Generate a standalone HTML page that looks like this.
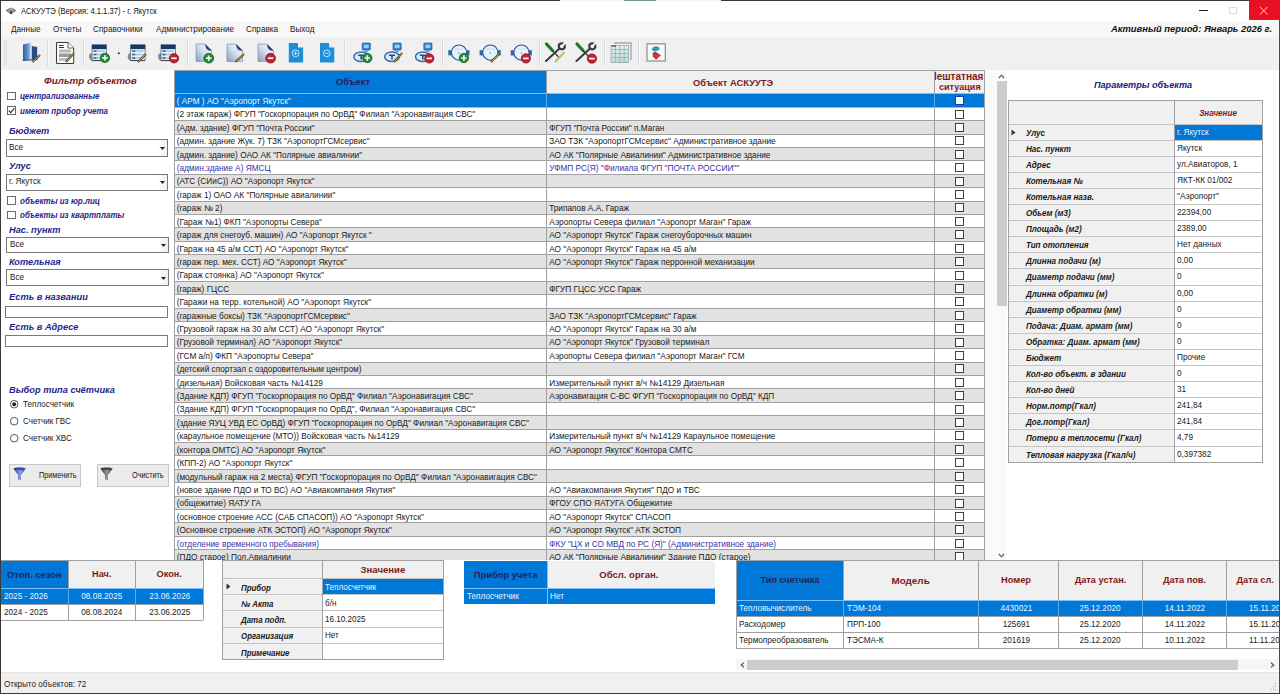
<!DOCTYPE html><html><head><meta charset="utf-8"><style>html,body{margin:0;padding:0;width:1280px;height:694px;overflow:hidden;background:#fff}body{position:relative;font-family:"Liberation Sans",sans-serif;}svg{overflow:visible}</style></head><body><div style="position:absolute;left:0px;top:0px;width:1280px;height:694px;background:#fff"></div>
<div style="position:absolute;left:1px;top:1px;width:1278px;height:19px;background:#fff"></div>
<svg style="position:absolute;left:6px;top:6.5px" width="10" height="7.5" viewBox="0 0 10 7.5"><path d="M0.2 3.7 L5 0.2 L9.8 3.7 L5 7.3 Z" fill="#a8a8a8"/><circle cx="1.3" cy="3.6" r="1" fill="#555"/><circle cx="8.6" cy="3.6" r="1" fill="#555"/><circle cx="3" cy="2" r="0.8" fill="#666"/><circle cx="7" cy="2" r="0.8" fill="#666"/><circle cx="5" cy="4.3" r="0.9" fill="#333"/><circle cx="5" cy="6.2" r="1" fill="#222"/><circle cx="3" cy="5.5" r="0.7" fill="#666"/><circle cx="7" cy="5.5" r="0.7" fill="#666"/></svg>
<div style="position:absolute;left:20.5px;top:5.65px;line-height:10.08px;font-size:8.4px;white-space:nowrap;transform:scaleX(0.91);transform-origin:0 0;color:#111">АСКУУТЭ (Версия: 4.1.1.37) - г. Якутск</div>
<div style="position:absolute;left:1199px;top:10px;width:9px;height:1px;background:#222"></div>
<div style="position:absolute;left:1229px;top:6.5px;width:8px;height:7.5px;border:1px solid #dcdcdc;box-sizing:border-box"></div>
<div style="position:absolute;left:1249px;top:0px;width:31px;height:19.5px;background:#e81123"></div>
<svg style="position:absolute;left:1259px;top:5.5px" width="10" height="10" viewBox="0 0 10 10"><path d="M1 1 L8.5 8.5 M8.5 1 L1 8.5" stroke="#ffe0e4" stroke-width="0.9"/></svg>
<div style="position:absolute;left:1px;top:20.5px;width:1278px;height:16.5px;background:#f7f7f7"></div>
<div style="position:absolute;left:10.9px;top:23.60px;line-height:11.16px;font-size:9.3px;white-space:nowrap;transform:scaleX(0.88);transform-origin:0 0;color:#1a1a1a">Данные</div>
<div style="position:absolute;left:52.9px;top:23.60px;line-height:11.16px;font-size:9.3px;white-space:nowrap;transform:scaleX(0.88);transform-origin:0 0;color:#1a1a1a">Отчеты</div>
<div style="position:absolute;left:93px;top:23.60px;line-height:11.16px;font-size:9.3px;white-space:nowrap;transform:scaleX(0.88);transform-origin:0 0;color:#1a1a1a">Справочники</div>
<div style="position:absolute;left:156px;top:23.60px;line-height:11.16px;font-size:9.3px;white-space:nowrap;transform:scaleX(0.88);transform-origin:0 0;color:#1a1a1a">Администрирование</div>
<div style="position:absolute;left:246px;top:23.60px;line-height:11.16px;font-size:9.3px;white-space:nowrap;transform:scaleX(0.88);transform-origin:0 0;color:#1a1a1a">Справка</div>
<div style="position:absolute;left:289.7px;top:23.60px;line-height:11.16px;font-size:9.3px;white-space:nowrap;transform:scaleX(0.88);transform-origin:0 0;color:#1a1a1a">Выход</div>
<div style="position:absolute;left:1111px;top:23.30px;line-height:11.28px;font-size:9.4px;white-space:nowrap;font-weight:bold;font-style:italic;color:#111">Активный период: Январь 2026 г.</div>
<div style="position:absolute;left:1px;top:37px;width:1278px;height:33px;background:#f0f0f0"></div>
<div style="position:absolute;left:3.5px;top:40px;width:1px;height:1px;background:#cfcfcf"></div>
<div style="position:absolute;left:6px;top:40px;width:1px;height:1px;background:#cfcfcf"></div>
<div style="position:absolute;left:3.5px;top:42px;width:1px;height:1px;background:#cfcfcf"></div>
<div style="position:absolute;left:6px;top:42px;width:1px;height:1px;background:#cfcfcf"></div>
<div style="position:absolute;left:3.5px;top:44px;width:1px;height:1px;background:#cfcfcf"></div>
<div style="position:absolute;left:6px;top:44px;width:1px;height:1px;background:#cfcfcf"></div>
<div style="position:absolute;left:3.5px;top:46px;width:1px;height:1px;background:#cfcfcf"></div>
<div style="position:absolute;left:6px;top:46px;width:1px;height:1px;background:#cfcfcf"></div>
<div style="position:absolute;left:3.5px;top:48px;width:1px;height:1px;background:#cfcfcf"></div>
<div style="position:absolute;left:6px;top:48px;width:1px;height:1px;background:#cfcfcf"></div>
<div style="position:absolute;left:3.5px;top:50px;width:1px;height:1px;background:#cfcfcf"></div>
<div style="position:absolute;left:6px;top:50px;width:1px;height:1px;background:#cfcfcf"></div>
<div style="position:absolute;left:3.5px;top:52px;width:1px;height:1px;background:#cfcfcf"></div>
<div style="position:absolute;left:6px;top:52px;width:1px;height:1px;background:#cfcfcf"></div>
<div style="position:absolute;left:3.5px;top:54px;width:1px;height:1px;background:#cfcfcf"></div>
<div style="position:absolute;left:6px;top:54px;width:1px;height:1px;background:#cfcfcf"></div>
<div style="position:absolute;left:3.5px;top:56px;width:1px;height:1px;background:#cfcfcf"></div>
<div style="position:absolute;left:6px;top:56px;width:1px;height:1px;background:#cfcfcf"></div>
<div style="position:absolute;left:3.5px;top:58px;width:1px;height:1px;background:#cfcfcf"></div>
<div style="position:absolute;left:6px;top:58px;width:1px;height:1px;background:#cfcfcf"></div>
<div style="position:absolute;left:3.5px;top:60px;width:1px;height:1px;background:#cfcfcf"></div>
<div style="position:absolute;left:6px;top:60px;width:1px;height:1px;background:#cfcfcf"></div>
<div style="position:absolute;left:3.5px;top:62px;width:1px;height:1px;background:#cfcfcf"></div>
<div style="position:absolute;left:6px;top:62px;width:1px;height:1px;background:#cfcfcf"></div>
<div style="position:absolute;left:3.5px;top:64px;width:1px;height:1px;background:#cfcfcf"></div>
<div style="position:absolute;left:6px;top:64px;width:1px;height:1px;background:#cfcfcf"></div>
<div style="position:absolute;left:47px;top:40px;width:1px;height:26px;background:#dadada"></div>
<div style="position:absolute;left:48px;top:40px;width:1px;height:26px;background:#fafafa"></div>
<div style="position:absolute;left:83px;top:40px;width:1px;height:26px;background:#dadada"></div>
<div style="position:absolute;left:84px;top:40px;width:1px;height:26px;background:#fafafa"></div>
<div style="position:absolute;left:186.5px;top:40px;width:1px;height:26px;background:#dadada"></div>
<div style="position:absolute;left:187.5px;top:40px;width:1px;height:26px;background:#fafafa"></div>
<div style="position:absolute;left:344px;top:40px;width:1px;height:26px;background:#dadada"></div>
<div style="position:absolute;left:345px;top:40px;width:1px;height:26px;background:#fafafa"></div>
<div style="position:absolute;left:442px;top:40px;width:1px;height:26px;background:#dadada"></div>
<div style="position:absolute;left:443px;top:40px;width:1px;height:26px;background:#fafafa"></div>
<div style="position:absolute;left:539px;top:40px;width:1px;height:26px;background:#dadada"></div>
<div style="position:absolute;left:540px;top:40px;width:1px;height:26px;background:#fafafa"></div>
<div style="position:absolute;left:604px;top:40px;width:1px;height:26px;background:#dadada"></div>
<div style="position:absolute;left:605px;top:40px;width:1px;height:26px;background:#fafafa"></div>
<div style="position:absolute;left:638px;top:40px;width:1px;height:26px;background:#dadada"></div>
<div style="position:absolute;left:639px;top:40px;width:1px;height:26px;background:#fafafa"></div>
<svg style="position:absolute;left:0;top:0" width="680" height="70" viewBox="0 0 680 70"><defs><linearGradient id="bk1" x1="0" y1="0" x2="1" y2="0"><stop offset="0" stop-color="#2f5f9e"/><stop offset="0.6" stop-color="#5f8fcc"/><stop offset="1" stop-color="#9cc2ec"/></linearGradient><linearGradient id="dg" x1="1" y1="0" x2="0" y2="1"><stop offset="0" stop-color="#f4f8fc"/><stop offset="0.45" stop-color="#d8e2f0"/><stop offset="1" stop-color="#8aa0bc"/></linearGradient><linearGradient id="gg" x1="0" y1="0" x2="0" y2="1"><stop offset="0" stop-color="#e8eef4"/><stop offset="1" stop-color="#b8e0d0"/></linearGradient></defs><path d="M23 44.5 L30.5 42.8 L30.5 59.5 L23 60.3 Z" fill="url(#bk1)"/><path d="M30.5 42.8 L31.8 43.2 L31.8 59.3 L30.5 59.5Z" fill="#cfe3f8"/><path d="M31.8 46 L37.2 47 L37.2 59.5 L31.8 59.3Z" fill="#244e88"/><path d="M22.5 60.3 L37.5 59.6" stroke="#1b3560" stroke-width="1"/><path d="M32.5 62 L40 55" stroke="#4e4420" stroke-width="2.2" stroke-linecap="butt"/><path d="M33.1 61.8 L40.2 54.4" stroke="#c8b868" stroke-width="0.9"/><path d="M56.5 42.5 H68 L73.7 48 V63.5 H56.5 Z" fill="#fbfbfb" stroke="#3a3a3a" stroke-width="1"/><path d="M68 42.5 V48 H73.7" fill="#fff" stroke="#3a3a3a" stroke-width="0.8"/><path d="M59 45.5 H63.5 M59 47.5 H64" stroke="#333" stroke-width="1.2"/><rect x="59" y="49.5" width="12" height="3" fill="#b8b8b8"/><rect x="59" y="53.5" width="12" height="3.5" fill="#9a9a9a"/><rect x="59" y="58" width="9" height="3" fill="#bdbdbd"/><path d="M66 62 L74 53" stroke="#4e4420" stroke-width="2.2" stroke-linecap="butt"/><path d="M66.6 61.8 L74.2 52.4" stroke="#c8b868" stroke-width="0.9"/><path d="M92 53 Q88.5 53.5 89 57 Q89.5 60.5 92 60.5Z" fill="#8c8c8c"/><rect x="92" y="44.8" width="14.4" height="15.8" fill="#dff3fb" stroke="#3e5a74" stroke-width="0.7"/><rect x="92" y="44.8" width="14.4" height="4.3" fill="#12386a"/><path d="M93.5 51 H105 M93.5 54.5 H105 M93.5 58 H105" stroke="#a8c4d8" stroke-width="1.6"/><path d="M93.5 51 H96.5 M93.5 54.5 H96.5 M93.5 58 H96.5" stroke="#4a5a6a" stroke-width="1.6"/><path d="M92 60.6 H106.4" stroke="#2a3a4a" stroke-width="0.9"/><circle cx="104.9" cy="57.9" r="4.7" fill="#23893b" stroke="#0f5a22" stroke-width="0.7"/><path d="M102.2 57.9 H107.60000000000001 M104.9 55.199999999999996 V60.6" stroke="#e8ffe8" stroke-width="1.7"/><circle cx="118.8" cy="53.2" r="1" fill="#222"/><path d="M130.7 53 Q127.19999999999999 53.5 127.69999999999999 57 Q128.2 60.5 130.7 60.5Z" fill="#8c8c8c"/><rect x="130.7" y="44.8" width="14.4" height="15.8" fill="#dff3fb" stroke="#3e5a74" stroke-width="0.7"/><rect x="130.7" y="44.8" width="14.4" height="4.3" fill="#12386a"/><path d="M132.2 51 H143.7 M132.2 54.5 H143.7 M132.2 58 H143.7" stroke="#a8c4d8" stroke-width="1.6"/><path d="M132.2 51 H135.2 M132.2 54.5 H135.2 M132.2 58 H135.2" stroke="#4a5a6a" stroke-width="1.6"/><path d="M130.7 60.6 H145.1" stroke="#2a3a4a" stroke-width="0.9"/><path d="M138 62 L146 54" stroke="#4e4420" stroke-width="2.2" stroke-linecap="butt"/><path d="M138.6 61.8 L146.2 53.4" stroke="#c8b868" stroke-width="0.9"/><path d="M161 53 Q157.5 53.5 158 57 Q158.5 60.5 161 60.5Z" fill="#8c8c8c"/><rect x="161" y="44.8" width="14.4" height="15.8" fill="#dff3fb" stroke="#3e5a74" stroke-width="0.7"/><rect x="161" y="44.8" width="14.4" height="4.3" fill="#12386a"/><path d="M162.5 51 H174 M162.5 54.5 H174 M162.5 58 H174" stroke="#a8c4d8" stroke-width="1.6"/><path d="M162.5 51 H165.5 M162.5 54.5 H165.5 M162.5 58 H165.5" stroke="#4a5a6a" stroke-width="1.6"/><path d="M161 60.6 H175.4" stroke="#2a3a4a" stroke-width="0.9"/><circle cx="174" cy="58.3" r="4.7" fill="#c21f30" stroke="#86101c" stroke-width="0.7"/><path d="M171.3 58.3 H176.7" stroke="#fff" stroke-width="1.7"/><path d="M196.1 44.1 H205.1 L211.6 50.6 V61.4 H196.1 Z" fill="url(#dg)" stroke="#7d8ea6" stroke-width="0.7"/><path d="M205.1 44.1 L211.6 50.6 Q205.6 51.5 205.1 44.1Z" fill="#1f3f80"/><circle cx="208.75" cy="58.2" r="4.9" fill="#23893b" stroke="#0f5a22" stroke-width="0.7"/><path d="M206.05 58.2 H211.45 M208.75 55.5 V60.900000000000006" stroke="#e8ffe8" stroke-width="1.7"/><path d="M227 44.1 H236 L242.5 50.6 V61.4 H227 Z" fill="url(#dg)" stroke="#7d8ea6" stroke-width="0.7"/><path d="M236 44.1 L242.5 50.6 Q236.5 51.5 236 44.1Z" fill="#1f3f80"/><path d="M235.5 62 L244 54" stroke="#4e4420" stroke-width="2.2" stroke-linecap="butt"/><path d="M236.1 61.8 L244.2 53.4" stroke="#c8b868" stroke-width="0.9"/><path d="M258 44.1 H267 L273.5 50.6 V61.4 H258 Z" fill="url(#dg)" stroke="#7d8ea6" stroke-width="0.7"/><path d="M267 44.1 L273.5 50.6 Q267.5 51.5 267 44.1Z" fill="#1f3f80"/><circle cx="270.6" cy="58.2" r="4.9" fill="#c21f30" stroke="#86101c" stroke-width="0.7"/><path d="M267.90000000000003 58.2 H273.3" stroke="#fff" stroke-width="1.7"/><path d="M288.8 43 H297.0 Q298.0 43 298.0 44 V47.6 H303.1 V62.4 H288.8 Z" fill="#1c8fd6"/><circle cx="295.6" cy="53.3" r="3.4" fill="none" stroke="#c8e6fb" stroke-width="1"/><path d="M295.6 51.5 V55.099999999999994 M293.8 53.3 H297.40000000000003" stroke="#c8e6fb" stroke-width="0.9"/><path d="M320 43 H328.2 Q329.2 43 329.2 44 V47.6 H334.3 V62.4 H320 Z" fill="#1c8fd6"/><circle cx="326.8" cy="53.3" r="3.4" fill="none" stroke="#c8e6fb" stroke-width="1"/><path d="M325.0 53.3 H328.6" stroke="#c8e6fb" stroke-width="0.9"/><rect x="362.2" y="43" width="8.2" height="7" rx="0.8" fill="#2f7ccc" stroke="#1a4f8a" stroke-width="0.6"/><rect x="363.8" y="44.6" width="5" height="3.6" fill="#8fd0fa"/><rect x="364.2" y="50" width="4" height="2" fill="#6aa8d8"/><ellipse cx="361.2" cy="56.8" rx="7.3" ry="4.8" fill="#d6ecfa" stroke="#3a68b0" stroke-width="1.5"/><path d="M358.2 55.3 H364.2 M361.2 55.3 V59.5" stroke="#2a4a78" stroke-width="1.6"/><circle cx="367.3" cy="58" r="4.7" fill="#23893b" stroke="#0f5a22" stroke-width="0.7"/><path d="M364.6 58 H370.0 M367.3 55.3 V60.7" stroke="#e8ffe8" stroke-width="1.7"/><rect x="393" y="43" width="8.2" height="7" rx="0.8" fill="#2f7ccc" stroke="#1a4f8a" stroke-width="0.6"/><rect x="394.6" y="44.6" width="5" height="3.6" fill="#8fd0fa"/><rect x="395" y="50" width="4" height="2" fill="#6aa8d8"/><ellipse cx="392" cy="56.8" rx="7.3" ry="4.8" fill="#d6ecfa" stroke="#3a68b0" stroke-width="1.5"/><path d="M389 55.3 H395 M392 55.3 V59.5" stroke="#2a4a78" stroke-width="1.6"/><path d="M394 62 L402 53" stroke="#4e4420" stroke-width="2.2" stroke-linecap="butt"/><path d="M394.6 61.8 L402.2 52.4" stroke="#c8b868" stroke-width="0.9"/><rect x="423.8" y="43" width="8.2" height="7" rx="0.8" fill="#2f7ccc" stroke="#1a4f8a" stroke-width="0.6"/><rect x="425.40000000000003" y="44.6" width="5" height="3.6" fill="#8fd0fa"/><rect x="425.8" y="50" width="4" height="2" fill="#6aa8d8"/><ellipse cx="422.8" cy="56.8" rx="7.3" ry="4.8" fill="#d6ecfa" stroke="#3a68b0" stroke-width="1.5"/><path d="M419.8 55.3 H425.8 M422.8 55.3 V59.5" stroke="#2a4a78" stroke-width="1.6"/><circle cx="429.3" cy="58.4" r="4.7" fill="#c21f30" stroke="#86101c" stroke-width="0.7"/><path d="M426.6 58.4 H432.0" stroke="#fff" stroke-width="1.7"/><rect x="448.3" y="50.2" width="3.3" height="5.2" fill="#2a6ab0"/><rect x="466.5" y="50.2" width="3" height="5.2" fill="#2a6ab0"/><circle cx="459" cy="52.6" r="7.6" fill="#e4f2fb" stroke="#2f4f86" stroke-width="1.1"/><circle cx="459" cy="53" r="0.8" fill="#7a8aa0"/><path d="M455 49 H463" stroke="#b8d4ec" stroke-width="0.8"/><circle cx="463.9" cy="58" r="4.7" fill="#23893b" stroke="#0f5a22" stroke-width="0.7"/><path d="M461.2 58 H466.59999999999997 M463.9 55.3 V60.7" stroke="#e8ffe8" stroke-width="1.7"/><rect x="479.6" y="50.2" width="3.3" height="5.2" fill="#2a6ab0"/><rect x="497.8" y="50.2" width="3" height="5.2" fill="#2a6ab0"/><circle cx="490.3" cy="52.6" r="7.6" fill="#e4f2fb" stroke="#2f4f86" stroke-width="1.1"/><circle cx="490.3" cy="53" r="0.8" fill="#7a8aa0"/><path d="M486.3 49 H494.3" stroke="#b8d4ec" stroke-width="0.8"/><path d="M491 62 L499.5 53.5" stroke="#4e4420" stroke-width="2.2" stroke-linecap="butt"/><path d="M491.6 61.8 L499.7 52.9" stroke="#c8b868" stroke-width="0.9"/><rect x="510.7" y="50.2" width="3.3" height="5.2" fill="#2a6ab0"/><rect x="528.9" y="50.2" width="3" height="5.2" fill="#2a6ab0"/><circle cx="521.4" cy="52.6" r="7.6" fill="#e4f2fb" stroke="#2f4f86" stroke-width="1.1"/><circle cx="521.4" cy="53" r="0.8" fill="#7a8aa0"/><path d="M517.4 49 H525.4" stroke="#b8d4ec" stroke-width="0.8"/><circle cx="525.9" cy="58.4" r="4.7" fill="#c21f30" stroke="#86101c" stroke-width="0.7"/><path d="M523.1999999999999 58.4 H528.6" stroke="#fff" stroke-width="1.7"/><path d="M546.5 44 L552.5 50.5" stroke="#1c7a1c" stroke-width="3.2" stroke-linecap="round"/><path d="M552.5 50.5 L559 57.5" stroke="#3a3a3a" stroke-width="1.3"/><path d="M546 61 L559.5 48.5" stroke="#3c3c3c" stroke-width="2.1" stroke-linecap="round"/><circle cx="561.8" cy="46.3" r="3" fill="none" stroke="#3c3c3c" stroke-width="2.2"/><path d="M562.5 45.5 L566 42" stroke="#f0f0f0" stroke-width="2"/><path d="M555 62 L564.5 52" stroke="#c8bc6a" stroke-width="2.2"/><path d="M577.0 44 L583.0 50.5" stroke="#1c7a1c" stroke-width="3.2" stroke-linecap="round"/><path d="M583.0 50.5 L589.5 57.5" stroke="#3a3a3a" stroke-width="1.3"/><path d="M576.5 61 L590.0 48.5" stroke="#3c3c3c" stroke-width="2.1" stroke-linecap="round"/><circle cx="592.3" cy="46.3" r="3" fill="none" stroke="#3c3c3c" stroke-width="2.2"/><path d="M593.0 45.5 L596.5 42" stroke="#f0f0f0" stroke-width="2"/><circle cx="591.9" cy="58.6" r="4.7" fill="#c21f30" stroke="#86101c" stroke-width="0.7"/><path d="M589.1999999999999 58.6 H594.6" stroke="#fff" stroke-width="1.7"/><path d="M614 43 H631 V60" fill="none" stroke="#a0a8b4" stroke-width="1.4"/><rect x="611" y="45.5" width="17.5" height="17" fill="url(#gg)" stroke="#9aa6b0" stroke-width="0.8"/><path d="M611 49.5 H628.5 M611 53.5 H628.5 M611 57.5 H628.5 M615.4 45.5 V62.5 M619.8 45.5 V62.5 M624.2 45.5 V62.5" stroke="#7eb0a0" stroke-width="0.7"/><path d="M611.5 46 H616" stroke="#444" stroke-width="1.2"/><rect x="647" y="43.8" width="18.3" height="17.2" fill="#f0fbfb" stroke="#9a8a88" stroke-width="1.2"/><path d="M652 48.8 Q653 45.8 656.5 46.3 Q660 46.8 659.5 49.5 Q657 51.5 654 51.2 Q651.5 50.8 652 48.8Z" fill="#2f9ab4"/><path d="M652.5 53 L655.5 51.8 L661 55.3 L656 59.8 L652.8 56.5Z" fill="#d23242"/><path d="M654.5 52.2 L657 53.8" stroke="#7a1a2a" stroke-width="1"/></svg>
<div style="position:absolute;left:1px;top:70px;width:173px;height:490px;background:#fff"></div>
<div style="position:absolute;left:44px;top:75.13px;line-height:11.88px;font-size:9.9px;white-space:nowrap;font-weight:bold;font-style:italic;color:#801a22">Фильтр объектов</div>
<div style="position:absolute;left:7px;top:91.5px;width:9px;height:8.5px;border:1px solid #6a6a6a;box-sizing:border-box;background:#fff"></div>
<div style="position:absolute;left:19.5px;top:91.06px;line-height:10.32px;font-size:8.6px;white-space:nowrap;transform:scaleX(0.93);transform-origin:0 0;font-weight:bold;font-style:italic;color:#26268a">централизованные</div>
<div style="position:absolute;left:7px;top:106px;width:9px;height:8.5px;border:1px solid #6a6a6a;box-sizing:border-box;background:#fff"></div>
<svg style="position:absolute;left:7px;top:106px" width="9" height="9" viewBox="0 0 9 9"><path d="M1.8 4.5 L3.8 6.6 L7.4 2.2" fill="none" stroke="#333" stroke-width="1.1"/></svg>
<div style="position:absolute;left:19.5px;top:105.56px;line-height:10.32px;font-size:8.6px;white-space:nowrap;transform:scaleX(0.93);transform-origin:0 0;font-weight:bold;font-style:italic;color:#26268a">имеют прибор учета</div>
<div style="position:absolute;left:8.8px;top:125.42px;line-height:11.64px;font-size:9.7px;white-space:nowrap;transform:scaleX(0.955);transform-origin:0 0;font-weight:bold;font-style:italic;color:#26268a">Бюджет</div>
<div style="position:absolute;left:5.5px;top:139px;width:162.0px;height:17.5px;border:1px solid #7a7a7a;box-sizing:border-box;background:#fff"></div>
<div style="position:absolute;left:9.0px;top:142.89px;line-height:9.96px;font-size:8.3px;white-space:nowrap;transform:scaleX(0.9879518072289155);transform-origin:0 0;color:#202020">Все</div>
<div style="position:absolute;left:156.5px;top:140px;width:10px;height:15.5px;background:linear-gradient(90deg,#fff,#f0f0f0)"></div>
<svg style="position:absolute;left:159.5px;top:146.75px" width="5" height="3" viewBox="0 0 5 3"><path d="M0 0 H5 L2.5 3Z" fill="#222"/></svg>
<div style="position:absolute;left:8.8px;top:159.72px;line-height:11.64px;font-size:9.7px;white-space:nowrap;transform:scaleX(0.955);transform-origin:0 0;font-weight:bold;font-style:italic;color:#26268a">Улус</div>
<div style="position:absolute;left:5.5px;top:173.5px;width:162.0px;height:17.099999999999994px;border:1px solid #7a7a7a;box-sizing:border-box;background:#fff"></div>
<div style="position:absolute;left:9.0px;top:177.19px;line-height:9.96px;font-size:8.3px;white-space:nowrap;transform:scaleX(0.9879518072289155);transform-origin:0 0;color:#202020">г. Якутск</div>
<div style="position:absolute;left:156.5px;top:174.5px;width:10px;height:15.099999999999994px;background:linear-gradient(90deg,#fff,#f0f0f0)"></div>
<svg style="position:absolute;left:159.5px;top:181.05px" width="5" height="3" viewBox="0 0 5 3"><path d="M0 0 H5 L2.5 3Z" fill="#222"/></svg>
<div style="position:absolute;left:7px;top:196px;width:9px;height:8.5px;border:1px solid #6a6a6a;box-sizing:border-box;background:#fff"></div>
<div style="position:absolute;left:19.5px;top:195.56px;line-height:10.32px;font-size:8.6px;white-space:nowrap;transform:scaleX(0.93);transform-origin:0 0;font-weight:bold;font-style:italic;color:#26268a">объекты из юр.лиц</div>
<div style="position:absolute;left:7px;top:210.5px;width:9px;height:8.5px;border:1px solid #6a6a6a;box-sizing:border-box;background:#fff"></div>
<div style="position:absolute;left:19.5px;top:210.06px;line-height:10.32px;font-size:8.6px;white-space:nowrap;transform:scaleX(0.93);transform-origin:0 0;font-weight:bold;font-style:italic;color:#26268a">объекты из квартплаты</div>
<div style="position:absolute;left:8.8px;top:224.02px;line-height:11.64px;font-size:9.7px;white-space:nowrap;transform:scaleX(0.955);transform-origin:0 0;font-weight:bold;font-style:italic;color:#26268a">Нас. пункт</div>
<div style="position:absolute;left:6px;top:236.5px;width:162.5px;height:16.900000000000006px;border:1px solid #7a7a7a;box-sizing:border-box;background:#fff"></div>
<div style="position:absolute;left:9.5px;top:240.09px;line-height:9.96px;font-size:8.3px;white-space:nowrap;transform:scaleX(0.9879518072289155);transform-origin:0 0;color:#202020">Все</div>
<div style="position:absolute;left:157.5px;top:237.5px;width:10px;height:14.900000000000006px;background:linear-gradient(90deg,#fff,#f0f0f0)"></div>
<svg style="position:absolute;left:160.5px;top:243.95px" width="5" height="3" viewBox="0 0 5 3"><path d="M0 0 H5 L2.5 3Z" fill="#222"/></svg>
<div style="position:absolute;left:8.8px;top:256.42px;line-height:11.64px;font-size:9.7px;white-space:nowrap;transform:scaleX(0.955);transform-origin:0 0;font-weight:bold;font-style:italic;color:#26268a">Котельная</div>
<div style="position:absolute;left:6px;top:269.4px;width:162.5px;height:17.100000000000023px;border:1px solid #7a7a7a;box-sizing:border-box;background:#fff"></div>
<div style="position:absolute;left:9.5px;top:273.09px;line-height:9.96px;font-size:8.3px;white-space:nowrap;transform:scaleX(0.9879518072289155);transform-origin:0 0;color:#202020">Все</div>
<div style="position:absolute;left:157.5px;top:270.4px;width:10px;height:15.100000000000023px;background:linear-gradient(90deg,#fff,#f0f0f0)"></div>
<svg style="position:absolute;left:160.5px;top:276.95px" width="5" height="3" viewBox="0 0 5 3"><path d="M0 0 H5 L2.5 3Z" fill="#222"/></svg>
<div style="position:absolute;left:8.8px;top:291.42px;line-height:11.64px;font-size:9.7px;white-space:nowrap;transform:scaleX(0.955);transform-origin:0 0;font-weight:bold;font-style:italic;color:#26268a">Есть в названии</div>
<div style="position:absolute;left:5px;top:305.5px;width:163px;height:12px;border:1px solid #7a7a7a;box-sizing:border-box;background:#fff"></div>
<div style="position:absolute;left:8.8px;top:321.42px;line-height:11.64px;font-size:9.7px;white-space:nowrap;transform:scaleX(0.955);transform-origin:0 0;font-weight:bold;font-style:italic;color:#26268a">Есть в Адресе</div>
<div style="position:absolute;left:5px;top:335px;width:163px;height:12px;border:1px solid #7a7a7a;box-sizing:border-box;background:#fff"></div>
<div style="position:absolute;left:8.8px;top:383.92px;line-height:11.64px;font-size:9.7px;white-space:nowrap;transform:scaleX(0.955);transform-origin:0 0;font-weight:bold;font-style:italic;color:#26268a">Выбор типа счётчика</div>
<svg style="position:absolute;left:10px;top:400.0px" width="9" height="9" viewBox="0 0 9 9"><circle cx="4.2" cy="4.2" r="3.8" fill="#fff" stroke="#444" stroke-width="0.9"/><circle cx="4.2" cy="4.2" r="2" fill="#222"/></svg>
<div style="position:absolute;left:23px;top:399.74px;line-height:9.96px;font-size:8.3px;white-space:nowrap;transform:scaleX(0.9759036144578312);transform-origin:0 0;color:#202020">Теплосчетчик</div>
<svg style="position:absolute;left:10px;top:417.0px" width="9" height="9" viewBox="0 0 9 9"><circle cx="4.2" cy="4.2" r="3.8" fill="#fff" stroke="#444" stroke-width="0.9"/></svg>
<div style="position:absolute;left:23px;top:416.74px;line-height:9.96px;font-size:8.3px;white-space:nowrap;transform:scaleX(0.9759036144578312);transform-origin:0 0;color:#202020">Счетчик ГВС</div>
<svg style="position:absolute;left:10px;top:434.0px" width="9" height="9" viewBox="0 0 9 9"><circle cx="4.2" cy="4.2" r="3.8" fill="#fff" stroke="#444" stroke-width="0.9"/></svg>
<div style="position:absolute;left:23px;top:433.74px;line-height:9.96px;font-size:8.3px;white-space:nowrap;transform:scaleX(0.9759036144578312);transform-origin:0 0;color:#202020">Счетчик ХВС</div>
<div style="position:absolute;left:9px;top:463.5px;width:72px;height:23.0px;border:1px solid #c8c8c8;box-sizing:border-box;background:#ececec"></div>
<svg style="position:absolute;left:12.5px;top:467.3px" width="16" height="17" viewBox="0 0 16 17"><defs><linearGradient id="fg9" x1="0" y1="0" x2="1" y2="0"><stop offset="0" stop-color="#2a3690"/><stop offset="0.55" stop-color="#8c9ee8"/><stop offset="1" stop-color="#2a3690"/></linearGradient></defs><path d="M0.5 1.8 Q6.5 -0.6 12.5 1.8 L8 8 V13.5 L5 12.3 V8 Z" fill="url(#fg9)"/><ellipse cx="6.5" cy="1.7" rx="6" ry="1.2" fill="#2a3690" opacity="0.8"/></svg>
<div style="position:absolute;left:38.6px;top:470.74px;line-height:9.96px;font-size:8.3px;white-space:nowrap;transform:scaleX(0.8756626506024097);transform-origin:0 0;color:#202020">Применить</div>
<div style="position:absolute;left:96.5px;top:463.5px;width:72.1px;height:23.0px;border:1px solid #c8c8c8;box-sizing:border-box;background:#ececec"></div>
<svg style="position:absolute;left:100.0px;top:467.3px" width="16" height="17" viewBox="0 0 16 17"><defs><linearGradient id="fg96" x1="0" y1="0" x2="1" y2="0"><stop offset="0" stop-color="#333"/><stop offset="0.55" stop-color="#9a9a9a"/><stop offset="1" stop-color="#333"/></linearGradient></defs><path d="M0.5 1.8 Q6.5 -0.6 12.5 1.8 L8 8 V13.5 L5 12.3 V8 Z" fill="url(#fg96)"/><ellipse cx="6.5" cy="1.7" rx="6" ry="1.2" fill="#333" opacity="0.8"/></svg>
<div style="position:absolute;left:132px;top:470.74px;line-height:9.96px;font-size:8.3px;white-space:nowrap;transform:scaleX(0.8756626506024097);transform-origin:0 0;color:#202020">Очистить</div>
<div style="position:absolute;left:174px;top:70px;width:811.40px;height:490px;overflow:hidden;background:#fff">
<div style="position:absolute;left:0px;top:0px;width:372px;height:23.799999999999997px;background:#0078d7"></div>
<div style="position:absolute;left:372px;top:0px;width:438.4px;height:23.799999999999997px;background:#f0f0f0"></div>
<div style="position:absolute;left:0px;width:358px;text-align:center;top:7.00px;line-height:11.16px;font-size:9.3px;white-space:nowrap;font-weight:bold;color:#2a1e5a">Объект</div>
<div style="position:absolute;left:372px;width:374.29999999999995px;text-align:center;top:6.90px;line-height:11.28px;font-size:9.4px;white-space:nowrap;font-weight:bold;color:#801a22">Объект АСКУУТЭ</div>
<div style="position:absolute;left:761.30px;top:1px;width:49.10px;height:22px;overflow:hidden">
<div style="position:absolute;left:-5.799999999999976px;top:-0.26px;line-height:12.0px;font-size:10px;white-space:nowrap;font-weight:bold;color:#801a22">Нештатная</div>
<div style="position:absolute;left:-10px;width:69.10000000000002px;text-align:center;top:11.09px;line-height:10.92px;font-size:9.1px;white-space:nowrap;font-weight:bold;color:#801a22">ситуация</div>
</div>
<div style="position:absolute;left:0px;top:23.799999999999997px;width:810.4px;height:13.41px;background:#0078d7"></div>
<div style="position:absolute;left:2.6999999999999886px;top:27.02px;line-height:9.94px;font-size:8.28px;white-space:nowrap;color:#eaf4ff">( АРМ ) АО &quot;Аэропорт Якутск&quot;</div>
<div style="position:absolute;left:781px;top:26.205px;width:9px;height:9px;background:#fff;border:1px solid #0a4a9a;box-sizing:border-box"></div>
<div style="position:absolute;left:0px;top:37.209999999999994px;width:810.4px;height:13.41px;background:#fff"></div>
<div style="position:absolute;left:2.6999999999999886px;top:40.43px;line-height:9.94px;font-size:8.28px;white-space:nowrap;color:#202020">(2 этаж гараж) ФГУП &quot;Госкорпорация по ОрВД&quot; Филиал &quot;Аэронавигация СВС&quot;</div>
<div style="position:absolute;left:781px;top:39.614999999999995px;width:9px;height:9px;background:#fff;border:1px solid #404040;box-sizing:border-box"></div>
<div style="position:absolute;left:0px;top:50.620000000000005px;width:810.4px;height:13.41px;background:#e2e2e2"></div>
<div style="position:absolute;left:2.6999999999999886px;top:53.84px;line-height:9.94px;font-size:8.28px;white-space:nowrap;color:#202020">(Адм. здание) ФГУП &quot;Почта России&quot;</div>
<div style="position:absolute;left:375.20000000000005px;top:53.84px;line-height:9.94px;font-size:8.28px;white-space:nowrap;color:#202020">ФГУП &quot;Почта России&quot; п.Маган</div>
<div style="position:absolute;left:781px;top:53.025000000000006px;width:9px;height:9px;background:#fff;border:1px solid #404040;box-sizing:border-box"></div>
<div style="position:absolute;left:0px;top:64.03px;width:810.4px;height:13.41px;background:#fff"></div>
<div style="position:absolute;left:2.6999999999999886px;top:67.25px;line-height:9.94px;font-size:8.28px;white-space:nowrap;color:#202020">(админ. здание Жук. 7) ТЗК &quot;АэропортГСМсервис&quot;</div>
<div style="position:absolute;left:375.20000000000005px;top:67.25px;line-height:9.94px;font-size:8.28px;white-space:nowrap;color:#202020">ЗАО ТЗК &quot;АэропортГСМсервис&quot; Административное здание</div>
<div style="position:absolute;left:781px;top:66.435px;width:9px;height:9px;background:#fff;border:1px solid #404040;box-sizing:border-box"></div>
<div style="position:absolute;left:0px;top:77.44px;width:810.4px;height:13.41px;background:#e2e2e2"></div>
<div style="position:absolute;left:2.6999999999999886px;top:80.66px;line-height:9.94px;font-size:8.28px;white-space:nowrap;color:#202020">(админ. здание) ОАО АК &quot;Полярные авиалинии&quot;</div>
<div style="position:absolute;left:375.20000000000005px;top:80.66px;line-height:9.94px;font-size:8.28px;white-space:nowrap;color:#202020">АО АК &quot;Полярные Авиалинии&quot; Административное здание</div>
<div style="position:absolute;left:781px;top:79.845px;width:9px;height:9px;background:#fff;border:1px solid #404040;box-sizing:border-box"></div>
<div style="position:absolute;left:0px;top:90.85px;width:810.4px;height:13.41px;background:#fff"></div>
<div style="position:absolute;left:2.6999999999999886px;top:94.07px;line-height:9.94px;font-size:8.28px;white-space:nowrap;color:#3535a8">(админ.здание А) ЯМСЦ</div>
<div style="position:absolute;left:375.20000000000005px;top:94.07px;line-height:9.94px;font-size:8.28px;white-space:nowrap;color:#3535a8"> УФМП РС(Я) &quot;Филиала ФГУП &quot;ПОЧТА РОССИИ&quot;&quot;</div>
<div style="position:absolute;left:781px;top:93.255px;width:9px;height:9px;background:#fff;border:1px solid #404040;box-sizing:border-box"></div>
<div style="position:absolute;left:0px;top:104.25999999999999px;width:810.4px;height:13.41px;background:#e2e2e2"></div>
<div style="position:absolute;left:2.6999999999999886px;top:107.48px;line-height:9.94px;font-size:8.28px;white-space:nowrap;color:#202020">(АТС (СИиС)) АО &quot;Аэропорт Якутск&quot;</div>
<div style="position:absolute;left:781px;top:106.66499999999999px;width:9px;height:9px;background:#fff;border:1px solid #404040;box-sizing:border-box"></div>
<div style="position:absolute;left:0px;top:117.67000000000002px;width:810.4px;height:13.41px;background:#fff"></div>
<div style="position:absolute;left:2.6999999999999886px;top:120.89px;line-height:9.94px;font-size:8.28px;white-space:nowrap;color:#202020">(гараж 1) ОАО АК &quot;Полярные авиалинии&quot;</div>
<div style="position:absolute;left:781px;top:120.07500000000002px;width:9px;height:9px;background:#fff;border:1px solid #404040;box-sizing:border-box"></div>
<div style="position:absolute;left:0px;top:131.07999999999998px;width:810.4px;height:13.41px;background:#e2e2e2"></div>
<div style="position:absolute;left:2.6999999999999886px;top:134.30px;line-height:9.94px;font-size:8.28px;white-space:nowrap;color:#202020">(гараж № 2)</div>
<div style="position:absolute;left:375.20000000000005px;top:134.30px;line-height:9.94px;font-size:8.28px;white-space:nowrap;color:#202020">Трипапов А.А. Гараж</div>
<div style="position:absolute;left:781px;top:133.48499999999999px;width:9px;height:9px;background:#fff;border:1px solid #404040;box-sizing:border-box"></div>
<div style="position:absolute;left:0px;top:144.49px;width:810.4px;height:13.41px;background:#fff"></div>
<div style="position:absolute;left:2.6999999999999886px;top:147.71px;line-height:9.94px;font-size:8.28px;white-space:nowrap;color:#202020">(Гараж №1) ФКП &quot;Аэропорты Севера&quot;</div>
<div style="position:absolute;left:375.20000000000005px;top:147.71px;line-height:9.94px;font-size:8.28px;white-space:nowrap;color:#202020">Аэропорты Севера филиал &quot;Аэропорт Маган&quot; Гараж</div>
<div style="position:absolute;left:781px;top:146.895px;width:9px;height:9px;background:#fff;border:1px solid #404040;box-sizing:border-box"></div>
<div style="position:absolute;left:0px;top:157.89999999999998px;width:810.4px;height:13.41px;background:#e2e2e2"></div>
<div style="position:absolute;left:2.6999999999999886px;top:161.12px;line-height:9.94px;font-size:8.28px;white-space:nowrap;color:#202020">(гараж для снегоуб. машин) АО &quot;Аэропорт Якутск &quot;</div>
<div style="position:absolute;left:375.20000000000005px;top:161.12px;line-height:9.94px;font-size:8.28px;white-space:nowrap;color:#202020">АО &quot;Аэропорт Якутск&quot; Гараж снегоуборочных машин</div>
<div style="position:absolute;left:781px;top:160.30499999999998px;width:9px;height:9px;background:#fff;border:1px solid #404040;box-sizing:border-box"></div>
<div style="position:absolute;left:0px;top:171.31px;width:810.4px;height:13.41px;background:#fff"></div>
<div style="position:absolute;left:2.6999999999999886px;top:174.53px;line-height:9.94px;font-size:8.28px;white-space:nowrap;color:#202020">(Гараж на 45 а/м ССТ) АО &quot;Аэропорт Якутск&quot;</div>
<div style="position:absolute;left:375.20000000000005px;top:174.53px;line-height:9.94px;font-size:8.28px;white-space:nowrap;color:#202020">АО &quot;Аэропорт Якутск&quot; Гараж на 45 а/м</div>
<div style="position:absolute;left:781px;top:173.715px;width:9px;height:9px;background:#fff;border:1px solid #404040;box-sizing:border-box"></div>
<div style="position:absolute;left:0px;top:184.72000000000003px;width:810.4px;height:13.41px;background:#e2e2e2"></div>
<div style="position:absolute;left:2.6999999999999886px;top:187.94px;line-height:9.94px;font-size:8.28px;white-space:nowrap;color:#202020">(гараж пер. мех. ССТ) АО &quot;Аэропорт Якутск&quot;</div>
<div style="position:absolute;left:375.20000000000005px;top:187.94px;line-height:9.94px;font-size:8.28px;white-space:nowrap;color:#202020">АО &quot;Аэропорт Якутск&quot; Гараж перронной механизации</div>
<div style="position:absolute;left:781px;top:187.125px;width:9px;height:9px;background:#fff;border:1px solid #404040;box-sizing:border-box"></div>
<div style="position:absolute;left:0px;top:198.13px;width:810.4px;height:13.41px;background:#fff"></div>
<div style="position:absolute;left:2.6999999999999886px;top:201.35px;line-height:9.94px;font-size:8.28px;white-space:nowrap;color:#202020">(Гараж стоянка) АО &quot;Аэропорт Якутск&quot;</div>
<div style="position:absolute;left:781px;top:200.53499999999997px;width:9px;height:9px;background:#fff;border:1px solid #404040;box-sizing:border-box"></div>
<div style="position:absolute;left:0px;top:211.54000000000002px;width:810.4px;height:13.41px;background:#e2e2e2"></div>
<div style="position:absolute;left:2.6999999999999886px;top:214.76px;line-height:9.94px;font-size:8.28px;white-space:nowrap;color:#202020">(гараж)  ГЦСС</div>
<div style="position:absolute;left:375.20000000000005px;top:214.76px;line-height:9.94px;font-size:8.28px;white-space:nowrap;color:#202020">ФГУП ГЦСС УСС Гараж</div>
<div style="position:absolute;left:781px;top:213.945px;width:9px;height:9px;background:#fff;border:1px solid #404040;box-sizing:border-box"></div>
<div style="position:absolute;left:0px;top:224.95px;width:810.4px;height:13.41px;background:#fff"></div>
<div style="position:absolute;left:2.6999999999999886px;top:228.17px;line-height:9.94px;font-size:8.28px;white-space:nowrap;color:#202020">(Гаражи на терр. котельной) АО  &quot;Аэропорт Якутск&quot;</div>
<div style="position:absolute;left:781px;top:227.35499999999996px;width:9px;height:9px;background:#fff;border:1px solid #404040;box-sizing:border-box"></div>
<div style="position:absolute;left:0px;top:238.36px;width:810.4px;height:13.41px;background:#e2e2e2"></div>
<div style="position:absolute;left:2.6999999999999886px;top:241.58px;line-height:9.94px;font-size:8.28px;white-space:nowrap;color:#202020">(гаражные боксы) ТЗК &quot;АэропортГСМсервис&quot;</div>
<div style="position:absolute;left:375.20000000000005px;top:241.58px;line-height:9.94px;font-size:8.28px;white-space:nowrap;color:#202020">ЗАО ТЗК &quot;АэропортГСМсервис&quot; Гараж</div>
<div style="position:absolute;left:781px;top:240.765px;width:9px;height:9px;background:#fff;border:1px solid #404040;box-sizing:border-box"></div>
<div style="position:absolute;left:0px;top:251.76999999999998px;width:810.4px;height:13.41px;background:#fff"></div>
<div style="position:absolute;left:2.6999999999999886px;top:254.99px;line-height:9.94px;font-size:8.28px;white-space:nowrap;color:#202020">(Грузовой гараж на 30 а/м ССТ) АО &quot;Аэропорт Якутск&quot;</div>
<div style="position:absolute;left:375.20000000000005px;top:254.99px;line-height:9.94px;font-size:8.28px;white-space:nowrap;color:#202020">АО &quot;Аэропорт Якутск&quot; Гараж на 30 а/м</div>
<div style="position:absolute;left:781px;top:254.17499999999995px;width:9px;height:9px;background:#fff;border:1px solid #404040;box-sizing:border-box"></div>
<div style="position:absolute;left:0px;top:265.18px;width:810.4px;height:13.41px;background:#e2e2e2"></div>
<div style="position:absolute;left:2.6999999999999886px;top:268.40px;line-height:9.94px;font-size:8.28px;white-space:nowrap;color:#202020">(Грузовой терминал) АО &quot;Аэропорт Якутск&quot;</div>
<div style="position:absolute;left:375.20000000000005px;top:268.40px;line-height:9.94px;font-size:8.28px;white-space:nowrap;color:#202020">АО &quot;Аэропорт Якутск&quot; Грузовой терминал</div>
<div style="position:absolute;left:781px;top:267.585px;width:9px;height:9px;background:#fff;border:1px solid #404040;box-sizing:border-box"></div>
<div style="position:absolute;left:0px;top:278.59px;width:810.4px;height:13.41px;background:#fff"></div>
<div style="position:absolute;left:2.6999999999999886px;top:281.81px;line-height:9.94px;font-size:8.28px;white-space:nowrap;color:#202020">(ГСМ а/п) ФКП &quot;Аэропорты Севера&quot;</div>
<div style="position:absolute;left:375.20000000000005px;top:281.81px;line-height:9.94px;font-size:8.28px;white-space:nowrap;color:#202020">Аэропорты Севера филиал &quot;Аэропорт Маган&quot; ГСМ</div>
<div style="position:absolute;left:781px;top:280.99499999999995px;width:9px;height:9px;background:#fff;border:1px solid #404040;box-sizing:border-box"></div>
<div style="position:absolute;left:0px;top:292.0px;width:810.4px;height:13.41px;background:#e2e2e2"></div>
<div style="position:absolute;left:2.6999999999999886px;top:295.22px;line-height:9.94px;font-size:8.28px;white-space:nowrap;color:#202020">(детский спортзал с оздоровительным центром)</div>
<div style="position:absolute;left:781px;top:294.405px;width:9px;height:9px;background:#fff;border:1px solid #404040;box-sizing:border-box"></div>
<div style="position:absolute;left:0px;top:305.41px;width:810.4px;height:13.41px;background:#fff"></div>
<div style="position:absolute;left:2.6999999999999886px;top:308.63px;line-height:9.94px;font-size:8.28px;white-space:nowrap;color:#202020">(дизельная) Войсковая часть №14129</div>
<div style="position:absolute;left:375.20000000000005px;top:308.63px;line-height:9.94px;font-size:8.28px;white-space:nowrap;color:#202020">Измерительный пункт в/ч №14129 Дизельная</div>
<div style="position:absolute;left:781px;top:307.815px;width:9px;height:9px;background:#fff;border:1px solid #404040;box-sizing:border-box"></div>
<div style="position:absolute;left:0px;top:318.82px;width:810.4px;height:13.41px;background:#e2e2e2"></div>
<div style="position:absolute;left:2.6999999999999886px;top:322.04px;line-height:9.94px;font-size:8.28px;white-space:nowrap;color:#202020">(Здание КДП) ФГУП &quot;Госкорпорация по ОрВД&quot; Филиал &quot;Аэронавигация СВС&quot;</div>
<div style="position:absolute;left:375.20000000000005px;top:322.04px;line-height:9.94px;font-size:8.28px;white-space:nowrap;color:#202020">Аэронавигация С-ВС ФГУП &quot;Госкорпорация по ОрВД&quot; КДП</div>
<div style="position:absolute;left:781px;top:321.22499999999997px;width:9px;height:9px;background:#fff;border:1px solid #404040;box-sizing:border-box"></div>
<div style="position:absolute;left:0px;top:332.23px;width:810.4px;height:13.41px;background:#fff"></div>
<div style="position:absolute;left:2.6999999999999886px;top:335.45px;line-height:9.94px;font-size:8.28px;white-space:nowrap;color:#202020">(Здание КДП) ФГУП &quot;Госкорпорация по ОрВД&quot;, Филиал &quot;Аэронавигация СВС&quot;</div>
<div style="position:absolute;left:781px;top:334.635px;width:9px;height:9px;background:#fff;border:1px solid #404040;box-sizing:border-box"></div>
<div style="position:absolute;left:0px;top:345.64000000000004px;width:810.4px;height:13.41px;background:#e2e2e2"></div>
<div style="position:absolute;left:2.6999999999999886px;top:348.86px;line-height:9.94px;font-size:8.28px;white-space:nowrap;color:#202020">(здание ЯУЦ УВД ЕС ОрВД) ФГУП &quot;Госкорпорация по ОрВД&quot; Филиал &quot;Аэронавигация СВС&quot;</div>
<div style="position:absolute;left:781px;top:348.045px;width:9px;height:9px;background:#fff;border:1px solid #404040;box-sizing:border-box"></div>
<div style="position:absolute;left:0px;top:359.05px;width:810.4px;height:13.41px;background:#fff"></div>
<div style="position:absolute;left:2.6999999999999886px;top:362.27px;line-height:9.94px;font-size:8.28px;white-space:nowrap;color:#202020">(караульное помещение (МТО)) Войсковая часть №14129</div>
<div style="position:absolute;left:375.20000000000005px;top:362.27px;line-height:9.94px;font-size:8.28px;white-space:nowrap;color:#202020">Измерительный пункт в/ч №14129 Караульное помещение</div>
<div style="position:absolute;left:781px;top:361.455px;width:9px;height:9px;background:#fff;border:1px solid #404040;box-sizing:border-box"></div>
<div style="position:absolute;left:0px;top:372.46000000000004px;width:810.4px;height:13.41px;background:#e2e2e2"></div>
<div style="position:absolute;left:2.6999999999999886px;top:375.68px;line-height:9.94px;font-size:8.28px;white-space:nowrap;color:#202020">(контора ОМТС) АО &quot;Аэропорт Якутск&quot;</div>
<div style="position:absolute;left:375.20000000000005px;top:375.68px;line-height:9.94px;font-size:8.28px;white-space:nowrap;color:#202020">АО &quot;Аэропорт Якутск&quot; Контора СМТС</div>
<div style="position:absolute;left:781px;top:374.865px;width:9px;height:9px;background:#fff;border:1px solid #404040;box-sizing:border-box"></div>
<div style="position:absolute;left:0px;top:385.87px;width:810.4px;height:13.41px;background:#fff"></div>
<div style="position:absolute;left:2.6999999999999886px;top:389.09px;line-height:9.94px;font-size:8.28px;white-space:nowrap;color:#202020">(КПП-2) АО &quot;Аэропорт Якутск&quot;</div>
<div style="position:absolute;left:781px;top:388.275px;width:9px;height:9px;background:#fff;border:1px solid #404040;box-sizing:border-box"></div>
<div style="position:absolute;left:0px;top:399.28000000000003px;width:810.4px;height:13.41px;background:#e2e2e2"></div>
<div style="position:absolute;left:2.6999999999999886px;top:402.50px;line-height:9.94px;font-size:8.28px;white-space:nowrap;color:#202020">(модульный гараж на 2 места) ФГУП &quot;Госкорпорация по ОрВД&quot; Филиал &quot;Аэронавигация СВС&quot;</div>
<div style="position:absolute;left:781px;top:401.685px;width:9px;height:9px;background:#fff;border:1px solid #404040;box-sizing:border-box"></div>
<div style="position:absolute;left:0px;top:412.69px;width:810.4px;height:13.41px;background:#fff"></div>
<div style="position:absolute;left:2.6999999999999886px;top:415.91px;line-height:9.94px;font-size:8.28px;white-space:nowrap;color:#202020">(новое здание ПДО и ТО ВС) АО &quot;Авиакомпания Якутия&quot;</div>
<div style="position:absolute;left:375.20000000000005px;top:415.91px;line-height:9.94px;font-size:8.28px;white-space:nowrap;color:#202020">АО &quot;Авиакомпания Якутия&quot; ПДО и ТВС</div>
<div style="position:absolute;left:781px;top:415.09499999999997px;width:9px;height:9px;background:#fff;border:1px solid #404040;box-sizing:border-box"></div>
<div style="position:absolute;left:0px;top:426.1px;width:810.4px;height:13.41px;background:#e2e2e2"></div>
<div style="position:absolute;left:2.6999999999999886px;top:429.32px;line-height:9.94px;font-size:8.28px;white-space:nowrap;color:#202020">(общежитие) ЯАТУ ГА</div>
<div style="position:absolute;left:375.20000000000005px;top:429.32px;line-height:9.94px;font-size:8.28px;white-space:nowrap;color:#202020">ФГОУ СПО ЯАТУГА Общежитие</div>
<div style="position:absolute;left:781px;top:428.505px;width:9px;height:9px;background:#fff;border:1px solid #404040;box-sizing:border-box"></div>
<div style="position:absolute;left:0px;top:439.51px;width:810.4px;height:13.41px;background:#fff"></div>
<div style="position:absolute;left:2.6999999999999886px;top:442.73px;line-height:9.94px;font-size:8.28px;white-space:nowrap;color:#202020">(основное строение АСС (САБ СПАСОП)) АО &quot;Аэропорт Якутск&quot;</div>
<div style="position:absolute;left:375.20000000000005px;top:442.73px;line-height:9.94px;font-size:8.28px;white-space:nowrap;color:#202020">АО &quot;Аэропорт Якутск&quot; СПАСОП</div>
<div style="position:absolute;left:781px;top:441.915px;width:9px;height:9px;background:#fff;border:1px solid #404040;box-sizing:border-box"></div>
<div style="position:absolute;left:0px;top:452.91999999999996px;width:810.4px;height:13.41px;background:#e2e2e2"></div>
<div style="position:absolute;left:2.6999999999999886px;top:456.14px;line-height:9.94px;font-size:8.28px;white-space:nowrap;color:#202020">(Основное строение АТК ЭСТОП) АО &quot;Аэропорт Якутск&quot;</div>
<div style="position:absolute;left:375.20000000000005px;top:456.14px;line-height:9.94px;font-size:8.28px;white-space:nowrap;color:#202020">АО &quot;Аэропорт Якутск&quot; АТК ЭСТОП</div>
<div style="position:absolute;left:781px;top:455.32500000000005px;width:9px;height:9px;background:#fff;border:1px solid #404040;box-sizing:border-box"></div>
<div style="position:absolute;left:0px;top:466.33000000000004px;width:810.4px;height:13.41px;background:#fff"></div>
<div style="position:absolute;left:2.6999999999999886px;top:469.55px;line-height:9.94px;font-size:8.28px;white-space:nowrap;color:#3535a8">(отделение временного пребывания)</div>
<div style="position:absolute;left:375.20000000000005px;top:469.55px;line-height:9.94px;font-size:8.28px;white-space:nowrap;color:#3535a8">ФКУ &quot;ЦХ и СО МВД по РС (Я)&quot; (Административное здание)</div>
<div style="position:absolute;left:781px;top:468.7350000000001px;width:9px;height:9px;background:#fff;border:1px solid #404040;box-sizing:border-box"></div>
<div style="position:absolute;left:0px;top:479.74px;width:810.4px;height:13.41px;background:#e2e2e2"></div>
<div style="position:absolute;left:2.6999999999999886px;top:482.96px;line-height:9.94px;font-size:8.28px;white-space:nowrap;color:#202020">(ПДО старое) Пол.Авиалинии</div>
<div style="position:absolute;left:375.20000000000005px;top:482.96px;line-height:9.94px;font-size:8.28px;white-space:nowrap;color:#202020">АО АК &quot;Полярные Авиалинии&quot; Здание ПДО (старое)</div>
<div style="position:absolute;left:781px;top:482.1450000000001px;width:9px;height:9px;background:#fff;border:1px solid #404040;box-sizing:border-box"></div>
<div style="position:absolute;left:0px;top:23.299999999999997px;width:810.4px;height:1px;background:#7fbfff"></div>
<div style="position:absolute;left:0px;top:36.709999999999994px;width:810.4px;height:1px;background:#7fbfff"></div>
<div style="position:absolute;left:0px;top:50.120000000000005px;width:810.4px;height:1px;background:#a0a0a0"></div>
<div style="position:absolute;left:0px;top:63.53px;width:810.4px;height:1px;background:#a0a0a0"></div>
<div style="position:absolute;left:0px;top:76.94px;width:810.4px;height:1px;background:#a0a0a0"></div>
<div style="position:absolute;left:0px;top:90.35px;width:810.4px;height:1px;background:#a0a0a0"></div>
<div style="position:absolute;left:0px;top:103.75999999999999px;width:810.4px;height:1px;background:#a0a0a0"></div>
<div style="position:absolute;left:0px;top:117.17000000000002px;width:810.4px;height:1px;background:#a0a0a0"></div>
<div style="position:absolute;left:0px;top:130.57999999999998px;width:810.4px;height:1px;background:#a0a0a0"></div>
<div style="position:absolute;left:0px;top:143.99px;width:810.4px;height:1px;background:#a0a0a0"></div>
<div style="position:absolute;left:0px;top:157.39999999999998px;width:810.4px;height:1px;background:#a0a0a0"></div>
<div style="position:absolute;left:0px;top:170.81px;width:810.4px;height:1px;background:#a0a0a0"></div>
<div style="position:absolute;left:0px;top:184.22000000000003px;width:810.4px;height:1px;background:#a0a0a0"></div>
<div style="position:absolute;left:0px;top:197.63px;width:810.4px;height:1px;background:#a0a0a0"></div>
<div style="position:absolute;left:0px;top:211.04000000000002px;width:810.4px;height:1px;background:#a0a0a0"></div>
<div style="position:absolute;left:0px;top:224.45px;width:810.4px;height:1px;background:#a0a0a0"></div>
<div style="position:absolute;left:0px;top:237.86px;width:810.4px;height:1px;background:#a0a0a0"></div>
<div style="position:absolute;left:0px;top:251.26999999999998px;width:810.4px;height:1px;background:#a0a0a0"></div>
<div style="position:absolute;left:0px;top:264.68px;width:810.4px;height:1px;background:#a0a0a0"></div>
<div style="position:absolute;left:0px;top:278.09px;width:810.4px;height:1px;background:#a0a0a0"></div>
<div style="position:absolute;left:0px;top:291.5px;width:810.4px;height:1px;background:#a0a0a0"></div>
<div style="position:absolute;left:0px;top:304.91px;width:810.4px;height:1px;background:#a0a0a0"></div>
<div style="position:absolute;left:0px;top:318.32px;width:810.4px;height:1px;background:#a0a0a0"></div>
<div style="position:absolute;left:0px;top:331.73px;width:810.4px;height:1px;background:#a0a0a0"></div>
<div style="position:absolute;left:0px;top:345.14000000000004px;width:810.4px;height:1px;background:#a0a0a0"></div>
<div style="position:absolute;left:0px;top:358.55px;width:810.4px;height:1px;background:#a0a0a0"></div>
<div style="position:absolute;left:0px;top:371.96000000000004px;width:810.4px;height:1px;background:#a0a0a0"></div>
<div style="position:absolute;left:0px;top:385.37px;width:810.4px;height:1px;background:#a0a0a0"></div>
<div style="position:absolute;left:0px;top:398.78000000000003px;width:810.4px;height:1px;background:#a0a0a0"></div>
<div style="position:absolute;left:0px;top:412.19px;width:810.4px;height:1px;background:#a0a0a0"></div>
<div style="position:absolute;left:0px;top:425.6px;width:810.4px;height:1px;background:#a0a0a0"></div>
<div style="position:absolute;left:0px;top:439.01px;width:810.4px;height:1px;background:#a0a0a0"></div>
<div style="position:absolute;left:0px;top:452.41999999999996px;width:810.4px;height:1px;background:#a0a0a0"></div>
<div style="position:absolute;left:0px;top:465.83000000000004px;width:810.4px;height:1px;background:#a0a0a0"></div>
<div style="position:absolute;left:0px;top:479.24px;width:810.4px;height:1px;background:#a0a0a0"></div>
<div style="position:absolute;left:0px;top:492.65px;width:810.4px;height:1px;background:#a0a0a0"></div>
<div style="position:absolute;left:0px;top:0px;width:810.4px;height:1px;background:#a0a0a0"></div>
<div style="position:absolute;left:-0.5px;top:0px;width:1px;height:490px;background:#a0a0a0"></div>
<div style="position:absolute;left:371.5px;top:0px;width:1px;height:490px;background:#a0a0a0"></div>
<div style="position:absolute;left:759.8px;top:0px;width:1px;height:490px;background:#a0a0a0"></div>
<div style="position:absolute;left:809.9px;top:0px;width:1px;height:490px;background:#a0a0a0"></div>
<div style="position:absolute;left:371.5px;top:24.299999999999997px;width:1px;height:12.41px;background:#5aaaf0"></div>
<div style="position:absolute;left:759.8px;top:24.299999999999997px;width:1px;height:12.41px;background:#5aaaf0"></div>
</div>
<div style="position:absolute;left:985px;top:70px;width:22px;height:490px;background:#fafafa"></div>
<div style="position:absolute;left:996.6px;top:80.5px;width:10.4px;height:225px;background:#cdcdcd"></div>
<svg style="position:absolute;left:998px;top:73.5px" width="7" height="5" viewBox="0 0 7 5"><path d="M0.8 4 L3.5 1.2 L6.2 4" fill="none" stroke="#505050" stroke-width="1.1"/></svg>
<svg style="position:absolute;left:998px;top:552.5px" width="7" height="5" viewBox="0 0 7 5"><path d="M0.8 1 L3.5 3.8 L6.2 1" fill="none" stroke="#505050" stroke-width="1.1"/></svg>
<div style="position:absolute;left:1007px;top:69.5px;width:272px;height:490.5px;background:#fff"></div>
<div style="position:absolute;left:1094px;top:78.92px;line-height:11.76px;font-size:9.8px;white-space:nowrap;transform:scaleX(0.93);transform-origin:0 0;font-weight:bold;font-style:italic;color:#20207a">Параметры объекта</div>
<div style="position:absolute;left:1008px;top:100.3px;width:254.5px;height:23.700000000000003px;background:#f0f0f0"></div>
<div style="position:absolute;left:1174.4px;width:88.09999999999991px;text-align:center;top:107.77px;line-height:10.44px;font-size:8.7px;white-space:nowrap;transform:scaleX(0.93);transform-origin:50% 0;font-weight:bold;font-style:italic;color:#801a22">Значение</div>
<div style="position:absolute;left:1008px;top:124.0px;width:166.4000000000001px;height:16.1px;background:#f0f0f0"></div>
<div style="position:absolute;left:1174.4px;top:124.0px;width:88.09999999999991px;height:16.1px;background:#0078d7"></div>
<div style="position:absolute;left:1026px;top:127.56px;line-height:10.32px;font-size:8.6px;white-space:nowrap;transform:scaleX(0.94);transform-origin:0 0;font-weight:bold;font-style:italic;color:#1a1a1a">Улус</div>
<div style="position:absolute;left:1177.4px;top:127.54px;line-height:9.96px;font-size:8.3px;white-space:nowrap;transform:scaleX(0.9879518072289155);transform-origin:0 0;color:#eaf4ff">г. Якутск</div>
<div style="position:absolute;left:1008px;top:140.1px;width:166.4000000000001px;height:16.1px;background:#f0f0f0"></div>
<div style="position:absolute;left:1174.4px;top:140.1px;width:88.09999999999991px;height:16.1px;background:#fff"></div>
<div style="position:absolute;left:1026px;top:143.66px;line-height:10.32px;font-size:8.6px;white-space:nowrap;transform:scaleX(0.94);transform-origin:0 0;font-weight:bold;font-style:italic;color:#1a1a1a">Нас. пункт</div>
<div style="position:absolute;left:1177.4px;top:143.64px;line-height:9.96px;font-size:8.3px;white-space:nowrap;transform:scaleX(0.9879518072289155);transform-origin:0 0;color:#202020">Якутск</div>
<div style="position:absolute;left:1008px;top:156.2px;width:166.4000000000001px;height:16.1px;background:#f0f0f0"></div>
<div style="position:absolute;left:1174.4px;top:156.2px;width:88.09999999999991px;height:16.1px;background:#fff"></div>
<div style="position:absolute;left:1026px;top:159.76px;line-height:10.32px;font-size:8.6px;white-space:nowrap;transform:scaleX(0.94);transform-origin:0 0;font-weight:bold;font-style:italic;color:#1a1a1a">Адрес</div>
<div style="position:absolute;left:1177.4px;top:159.74px;line-height:9.96px;font-size:8.3px;white-space:nowrap;transform:scaleX(0.9879518072289155);transform-origin:0 0;color:#202020">ул.Авиаторов, 1</div>
<div style="position:absolute;left:1008px;top:172.3px;width:166.4000000000001px;height:16.1px;background:#f0f0f0"></div>
<div style="position:absolute;left:1174.4px;top:172.3px;width:88.09999999999991px;height:16.1px;background:#fff"></div>
<div style="position:absolute;left:1026px;top:175.86px;line-height:10.32px;font-size:8.6px;white-space:nowrap;transform:scaleX(0.94);transform-origin:0 0;font-weight:bold;font-style:italic;color:#1a1a1a">Котельная №</div>
<div style="position:absolute;left:1177.4px;top:175.84px;line-height:9.96px;font-size:8.3px;white-space:nowrap;transform:scaleX(0.9879518072289155);transform-origin:0 0;color:#202020">ЯКТ-КК 01/002</div>
<div style="position:absolute;left:1008px;top:188.4px;width:166.4000000000001px;height:16.1px;background:#f0f0f0"></div>
<div style="position:absolute;left:1174.4px;top:188.4px;width:88.09999999999991px;height:16.1px;background:#fff"></div>
<div style="position:absolute;left:1026px;top:191.96px;line-height:10.32px;font-size:8.6px;white-space:nowrap;transform:scaleX(0.94);transform-origin:0 0;font-weight:bold;font-style:italic;color:#1a1a1a">Котельная назв.</div>
<div style="position:absolute;left:1177.4px;top:191.94px;line-height:9.96px;font-size:8.3px;white-space:nowrap;transform:scaleX(0.9879518072289155);transform-origin:0 0;color:#202020">&quot;Аэропорт&quot;</div>
<div style="position:absolute;left:1008px;top:204.5px;width:166.4000000000001px;height:16.1px;background:#f0f0f0"></div>
<div style="position:absolute;left:1174.4px;top:204.5px;width:88.09999999999991px;height:16.1px;background:#fff"></div>
<div style="position:absolute;left:1026px;top:208.06px;line-height:10.32px;font-size:8.6px;white-space:nowrap;transform:scaleX(0.94);transform-origin:0 0;font-weight:bold;font-style:italic;color:#1a1a1a">Обьем (м3)</div>
<div style="position:absolute;left:1177.4px;top:208.04px;line-height:9.96px;font-size:8.3px;white-space:nowrap;transform:scaleX(0.9879518072289155);transform-origin:0 0;color:#202020">22394,00</div>
<div style="position:absolute;left:1008px;top:220.60000000000002px;width:166.4000000000001px;height:16.1px;background:#f0f0f0"></div>
<div style="position:absolute;left:1174.4px;top:220.60000000000002px;width:88.09999999999991px;height:16.1px;background:#fff"></div>
<div style="position:absolute;left:1026px;top:224.16px;line-height:10.32px;font-size:8.6px;white-space:nowrap;transform:scaleX(0.94);transform-origin:0 0;font-weight:bold;font-style:italic;color:#1a1a1a">Площадь (м2)</div>
<div style="position:absolute;left:1177.4px;top:224.14px;line-height:9.96px;font-size:8.3px;white-space:nowrap;transform:scaleX(0.9879518072289155);transform-origin:0 0;color:#202020">2389,00</div>
<div style="position:absolute;left:1008px;top:236.70000000000002px;width:166.4000000000001px;height:16.1px;background:#f0f0f0"></div>
<div style="position:absolute;left:1174.4px;top:236.70000000000002px;width:88.09999999999991px;height:16.1px;background:#fff"></div>
<div style="position:absolute;left:1026px;top:240.26px;line-height:10.32px;font-size:8.6px;white-space:nowrap;transform:scaleX(0.94);transform-origin:0 0;font-weight:bold;font-style:italic;color:#1a1a1a">Тип отопления</div>
<div style="position:absolute;left:1177.4px;top:240.24px;line-height:9.96px;font-size:8.3px;white-space:nowrap;transform:scaleX(0.9879518072289155);transform-origin:0 0;color:#202020">Нет данных</div>
<div style="position:absolute;left:1008px;top:252.8px;width:166.4000000000001px;height:16.1px;background:#f0f0f0"></div>
<div style="position:absolute;left:1174.4px;top:252.8px;width:88.09999999999991px;height:16.1px;background:#fff"></div>
<div style="position:absolute;left:1026px;top:256.36px;line-height:10.32px;font-size:8.6px;white-space:nowrap;transform:scaleX(0.94);transform-origin:0 0;font-weight:bold;font-style:italic;color:#1a1a1a">Длинна подачи (м)</div>
<div style="position:absolute;left:1177.4px;top:256.34px;line-height:9.96px;font-size:8.3px;white-space:nowrap;transform:scaleX(0.9879518072289155);transform-origin:0 0;color:#202020">0,00</div>
<div style="position:absolute;left:1008px;top:268.9px;width:166.4000000000001px;height:16.1px;background:#f0f0f0"></div>
<div style="position:absolute;left:1174.4px;top:268.9px;width:88.09999999999991px;height:16.1px;background:#fff"></div>
<div style="position:absolute;left:1026px;top:272.46px;line-height:10.32px;font-size:8.6px;white-space:nowrap;transform:scaleX(0.94);transform-origin:0 0;font-weight:bold;font-style:italic;color:#1a1a1a">Диаметр подачи (мм)</div>
<div style="position:absolute;left:1177.4px;top:272.44px;line-height:9.96px;font-size:8.3px;white-space:nowrap;transform:scaleX(0.9879518072289155);transform-origin:0 0;color:#202020">0</div>
<div style="position:absolute;left:1008px;top:285.0px;width:166.4000000000001px;height:16.1px;background:#f0f0f0"></div>
<div style="position:absolute;left:1174.4px;top:285.0px;width:88.09999999999991px;height:16.1px;background:#fff"></div>
<div style="position:absolute;left:1026px;top:288.56px;line-height:10.32px;font-size:8.6px;white-space:nowrap;transform:scaleX(0.94);transform-origin:0 0;font-weight:bold;font-style:italic;color:#1a1a1a">Длинна обратки (м)</div>
<div style="position:absolute;left:1177.4px;top:288.54px;line-height:9.96px;font-size:8.3px;white-space:nowrap;transform:scaleX(0.9879518072289155);transform-origin:0 0;color:#202020">0,00</div>
<div style="position:absolute;left:1008px;top:301.1px;width:166.4000000000001px;height:16.1px;background:#f0f0f0"></div>
<div style="position:absolute;left:1174.4px;top:301.1px;width:88.09999999999991px;height:16.1px;background:#fff"></div>
<div style="position:absolute;left:1026px;top:304.66px;line-height:10.32px;font-size:8.6px;white-space:nowrap;transform:scaleX(0.94);transform-origin:0 0;font-weight:bold;font-style:italic;color:#1a1a1a">Диаметр обратки (мм)</div>
<div style="position:absolute;left:1177.4px;top:304.64px;line-height:9.96px;font-size:8.3px;white-space:nowrap;transform:scaleX(0.9879518072289155);transform-origin:0 0;color:#202020">0</div>
<div style="position:absolute;left:1008px;top:317.20000000000005px;width:166.4000000000001px;height:16.1px;background:#f0f0f0"></div>
<div style="position:absolute;left:1174.4px;top:317.20000000000005px;width:88.09999999999991px;height:16.1px;background:#fff"></div>
<div style="position:absolute;left:1026px;top:320.76px;line-height:10.32px;font-size:8.6px;white-space:nowrap;transform:scaleX(0.94);transform-origin:0 0;font-weight:bold;font-style:italic;color:#1a1a1a">Подача: Диам. армат (мм)</div>
<div style="position:absolute;left:1177.4px;top:320.74px;line-height:9.96px;font-size:8.3px;white-space:nowrap;transform:scaleX(0.9879518072289155);transform-origin:0 0;color:#202020">0</div>
<div style="position:absolute;left:1008px;top:333.3px;width:166.4000000000001px;height:16.1px;background:#f0f0f0"></div>
<div style="position:absolute;left:1174.4px;top:333.3px;width:88.09999999999991px;height:16.1px;background:#fff"></div>
<div style="position:absolute;left:1026px;top:336.86px;line-height:10.32px;font-size:8.6px;white-space:nowrap;transform:scaleX(0.94);transform-origin:0 0;font-weight:bold;font-style:italic;color:#1a1a1a">Обратка: Диам. армат (мм)</div>
<div style="position:absolute;left:1177.4px;top:336.84px;line-height:9.96px;font-size:8.3px;white-space:nowrap;transform:scaleX(0.9879518072289155);transform-origin:0 0;color:#202020">0</div>
<div style="position:absolute;left:1008px;top:349.40000000000003px;width:166.4000000000001px;height:16.1px;background:#f0f0f0"></div>
<div style="position:absolute;left:1174.4px;top:349.40000000000003px;width:88.09999999999991px;height:16.1px;background:#fff"></div>
<div style="position:absolute;left:1026px;top:352.96px;line-height:10.32px;font-size:8.6px;white-space:nowrap;transform:scaleX(0.94);transform-origin:0 0;font-weight:bold;font-style:italic;color:#1a1a1a">Бюджет</div>
<div style="position:absolute;left:1177.4px;top:352.94px;line-height:9.96px;font-size:8.3px;white-space:nowrap;transform:scaleX(0.9879518072289155);transform-origin:0 0;color:#202020">Прочие</div>
<div style="position:absolute;left:1008px;top:365.5px;width:166.4000000000001px;height:16.1px;background:#f0f0f0"></div>
<div style="position:absolute;left:1174.4px;top:365.5px;width:88.09999999999991px;height:16.1px;background:#fff"></div>
<div style="position:absolute;left:1026px;top:369.06px;line-height:10.32px;font-size:8.6px;white-space:nowrap;transform:scaleX(0.94);transform-origin:0 0;font-weight:bold;font-style:italic;color:#1a1a1a">Кол-во объект. в здании</div>
<div style="position:absolute;left:1177.4px;top:369.04px;line-height:9.96px;font-size:8.3px;white-space:nowrap;transform:scaleX(0.9879518072289155);transform-origin:0 0;color:#202020">0</div>
<div style="position:absolute;left:1008px;top:381.6px;width:166.4000000000001px;height:16.1px;background:#f0f0f0"></div>
<div style="position:absolute;left:1174.4px;top:381.6px;width:88.09999999999991px;height:16.1px;background:#fff"></div>
<div style="position:absolute;left:1026px;top:385.16px;line-height:10.32px;font-size:8.6px;white-space:nowrap;transform:scaleX(0.94);transform-origin:0 0;font-weight:bold;font-style:italic;color:#1a1a1a">Кол-во дней</div>
<div style="position:absolute;left:1177.4px;top:385.14px;line-height:9.96px;font-size:8.3px;white-space:nowrap;transform:scaleX(0.9879518072289155);transform-origin:0 0;color:#202020">31</div>
<div style="position:absolute;left:1008px;top:397.70000000000005px;width:166.4000000000001px;height:16.1px;background:#f0f0f0"></div>
<div style="position:absolute;left:1174.4px;top:397.70000000000005px;width:88.09999999999991px;height:16.1px;background:#fff"></div>
<div style="position:absolute;left:1026px;top:401.26px;line-height:10.32px;font-size:8.6px;white-space:nowrap;transform:scaleX(0.94);transform-origin:0 0;font-weight:bold;font-style:italic;color:#1a1a1a">Норм.потр(Гкал)</div>
<div style="position:absolute;left:1177.4px;top:401.24px;line-height:9.96px;font-size:8.3px;white-space:nowrap;transform:scaleX(0.9879518072289155);transform-origin:0 0;color:#202020">241,84</div>
<div style="position:absolute;left:1008px;top:413.8px;width:166.4000000000001px;height:16.1px;background:#f0f0f0"></div>
<div style="position:absolute;left:1174.4px;top:413.8px;width:88.09999999999991px;height:16.1px;background:#fff"></div>
<div style="position:absolute;left:1026px;top:417.36px;line-height:10.32px;font-size:8.6px;white-space:nowrap;transform:scaleX(0.94);transform-origin:0 0;font-weight:bold;font-style:italic;color:#1a1a1a">Дог.потр(Гкал)</div>
<div style="position:absolute;left:1177.4px;top:417.34px;line-height:9.96px;font-size:8.3px;white-space:nowrap;transform:scaleX(0.9879518072289155);transform-origin:0 0;color:#202020">241,84</div>
<div style="position:absolute;left:1008px;top:429.90000000000003px;width:166.4000000000001px;height:16.1px;background:#f0f0f0"></div>
<div style="position:absolute;left:1174.4px;top:429.90000000000003px;width:88.09999999999991px;height:16.1px;background:#fff"></div>
<div style="position:absolute;left:1026px;top:433.46px;line-height:10.32px;font-size:8.6px;white-space:nowrap;transform:scaleX(0.94);transform-origin:0 0;font-weight:bold;font-style:italic;color:#1a1a1a">Потери в теплосети (Гкал)</div>
<div style="position:absolute;left:1177.4px;top:433.44px;line-height:9.96px;font-size:8.3px;white-space:nowrap;transform:scaleX(0.9879518072289155);transform-origin:0 0;color:#202020">4,79</div>
<div style="position:absolute;left:1008px;top:446.0px;width:166.4000000000001px;height:16.1px;background:#f0f0f0"></div>
<div style="position:absolute;left:1174.4px;top:446.0px;width:88.09999999999991px;height:16.1px;background:#fff"></div>
<div style="position:absolute;left:1026px;top:449.56px;line-height:10.32px;font-size:8.6px;white-space:nowrap;transform:scaleX(0.94);transform-origin:0 0;font-weight:bold;font-style:italic;color:#1a1a1a">Тепловая нагрузка (Гкал/ч)</div>
<div style="position:absolute;left:1177.4px;top:449.54px;line-height:9.96px;font-size:8.3px;white-space:nowrap;transform:scaleX(0.9879518072289155);transform-origin:0 0;color:#202020">0,397382</div>
<svg style="position:absolute;left:1011px;top:128.5px" width="5" height="7" viewBox="0 0 5 7"><path d="M0.5 0.5 L4.5 3.5 L0.5 6.5Z" fill="#333"/></svg>
<div style="position:absolute;left:1008px;top:123.5px;width:254.5px;height:1px;background:#c4c4c4"></div>
<div style="position:absolute;left:1008px;top:139.6px;width:254.5px;height:1px;background:#c4c4c4"></div>
<div style="position:absolute;left:1008px;top:155.7px;width:254.5px;height:1px;background:#c4c4c4"></div>
<div style="position:absolute;left:1008px;top:171.8px;width:254.5px;height:1px;background:#c4c4c4"></div>
<div style="position:absolute;left:1008px;top:187.9px;width:254.5px;height:1px;background:#c4c4c4"></div>
<div style="position:absolute;left:1008px;top:204.0px;width:254.5px;height:1px;background:#c4c4c4"></div>
<div style="position:absolute;left:1008px;top:220.10000000000002px;width:254.5px;height:1px;background:#c4c4c4"></div>
<div style="position:absolute;left:1008px;top:236.20000000000002px;width:254.5px;height:1px;background:#c4c4c4"></div>
<div style="position:absolute;left:1008px;top:252.3px;width:254.5px;height:1px;background:#c4c4c4"></div>
<div style="position:absolute;left:1008px;top:268.4px;width:254.5px;height:1px;background:#c4c4c4"></div>
<div style="position:absolute;left:1008px;top:284.5px;width:254.5px;height:1px;background:#c4c4c4"></div>
<div style="position:absolute;left:1008px;top:300.6px;width:254.5px;height:1px;background:#c4c4c4"></div>
<div style="position:absolute;left:1008px;top:316.70000000000005px;width:254.5px;height:1px;background:#c4c4c4"></div>
<div style="position:absolute;left:1008px;top:332.8px;width:254.5px;height:1px;background:#c4c4c4"></div>
<div style="position:absolute;left:1008px;top:348.90000000000003px;width:254.5px;height:1px;background:#c4c4c4"></div>
<div style="position:absolute;left:1008px;top:365.0px;width:254.5px;height:1px;background:#c4c4c4"></div>
<div style="position:absolute;left:1008px;top:381.1px;width:254.5px;height:1px;background:#c4c4c4"></div>
<div style="position:absolute;left:1008px;top:397.20000000000005px;width:254.5px;height:1px;background:#c4c4c4"></div>
<div style="position:absolute;left:1008px;top:413.3px;width:254.5px;height:1px;background:#c4c4c4"></div>
<div style="position:absolute;left:1008px;top:429.40000000000003px;width:254.5px;height:1px;background:#c4c4c4"></div>
<div style="position:absolute;left:1008px;top:445.5px;width:254.5px;height:1px;background:#c4c4c4"></div>
<div style="position:absolute;left:1008px;top:461.6px;width:254.5px;height:1px;background:#a0a0a0"></div>
<div style="position:absolute;left:1008px;top:99.8px;width:254.5px;height:1px;background:#a0a0a0"></div>
<div style="position:absolute;left:1007.5px;top:100.3px;width:1px;height:361.8px;background:#a0a0a0"></div>
<div style="position:absolute;left:1173.9px;top:100.3px;width:1px;height:361.8px;background:#a0a0a0"></div>
<div style="position:absolute;left:1262.0px;top:100.3px;width:1px;height:361.8px;background:#a0a0a0"></div>
<div style="position:absolute;left:1273px;top:69.5px;width:1px;height:490.5px;background:#f8f8f8"></div>
<div style="position:absolute;left:1px;top:560px;width:1278px;height:112.5px;background:#fff"></div>
<div style="position:absolute;left:0.5px;top:560.4px;width:67.5px;height:27.600000000000023px;background:#0078d7"></div>
<div style="position:absolute;left:68px;top:560.4px;width:135px;height:27.600000000000023px;background:#f0f0f0"></div>
<div style="position:absolute;left:0.5px;width:67.5px;text-align:center;top:568.60px;line-height:11.28px;font-size:9.4px;white-space:nowrap;font-weight:bold;color:#2a1e5a">Отоп. сезон</div>
<div style="position:absolute;left:68px;width:67.5px;text-align:center;top:568.79px;line-height:11.04px;font-size:9.2px;white-space:nowrap;font-weight:bold;color:#801a22">Нач.</div>
<div style="position:absolute;left:135.5px;width:67.5px;text-align:center;top:568.79px;line-height:11.04px;font-size:9.2px;white-space:nowrap;font-weight:bold;color:#801a22">Окон.</div>
<div style="position:absolute;left:0.5px;top:588px;width:202.5px;height:16px;background:#0078d7"></div>
<div style="position:absolute;left:3.7px;top:591.94px;line-height:9.96px;font-size:8.3px;white-space:nowrap;transform:scaleX(0.9879518072289155);transform-origin:0 0;color:#eaf4ff">2025 - 2026</div>
<div style="position:absolute;left:68px;width:67.5px;text-align:center;top:591.94px;line-height:9.96px;font-size:8.3px;white-space:nowrap;transform:scaleX(0.9879518072289155);transform-origin:50% 0;color:#eaf4ff">08.08.2025</div>
<div style="position:absolute;left:135.5px;width:67.5px;text-align:center;top:591.94px;line-height:9.96px;font-size:8.3px;white-space:nowrap;transform:scaleX(0.9879518072289155);transform-origin:50% 0;color:#eaf4ff">23.06.2026</div>
<div style="position:absolute;left:3.7px;top:608.19px;line-height:9.96px;font-size:8.3px;white-space:nowrap;transform:scaleX(0.9879518072289155);transform-origin:0 0;color:#202020">2024 - 2025</div>
<div style="position:absolute;left:68px;width:67.5px;text-align:center;top:608.19px;line-height:9.96px;font-size:8.3px;white-space:nowrap;transform:scaleX(0.9879518072289155);transform-origin:50% 0;color:#202020">08.08.2024</div>
<div style="position:absolute;left:135.5px;width:67.5px;text-align:center;top:608.19px;line-height:9.96px;font-size:8.3px;white-space:nowrap;transform:scaleX(0.9879518072289155);transform-origin:50% 0;color:#202020">23.06.2025</div>
<div style="position:absolute;left:0.5px;top:559.9px;width:202.5px;height:1px;background:#a0a0a0"></div>
<div style="position:absolute;left:0.5px;top:587.5px;width:202.5px;height:1px;background:#7fbfff"></div>
<div style="position:absolute;left:0.5px;top:603.5px;width:202.5px;height:1px;background:#a0a0a0"></div>
<div style="position:absolute;left:0.5px;top:620.0px;width:202.5px;height:1px;background:#a0a0a0"></div>
<div style="position:absolute;left:67.5px;top:560.4px;width:1px;height:60.10000000000002px;background:#a0a0a0"></div>
<div style="position:absolute;left:135.0px;top:560.4px;width:1px;height:60.10000000000002px;background:#a0a0a0"></div>
<div style="position:absolute;left:202.5px;top:560.4px;width:1px;height:60.10000000000002px;background:#a0a0a0"></div>
<div style="position:absolute;left:67.5px;top:588.5px;width:1px;height:15.0px;background:#5aaaf0"></div>
<div style="position:absolute;left:135.0px;top:588.5px;width:1px;height:15.0px;background:#5aaaf0"></div>
<div style="position:absolute;left:222.3px;top:560.4px;width:221.09999999999997px;height:99.19999999999993px;background:#f0f0f0"></div>
<div style="position:absolute;left:322.5px;width:120.89999999999998px;text-align:center;top:564.11px;line-height:11.52px;font-size:9.6px;white-space:nowrap;font-weight:bold;color:#801a22">Значение</div>
<div style="position:absolute;left:322.5px;top:578.3px;width:120.89999999999998px;height:16.25999999999999px;background:#0078d7"></div>
<div style="position:absolute;left:240.9px;top:582.58px;line-height:10.2px;font-size:8.5px;white-space:nowrap;transform:scaleX(0.93);transform-origin:0 0;font-weight:bold;font-style:italic;color:#1a1a1a">Прибор</div>
<div style="position:absolute;left:325.2px;top:582.57px;line-height:9.96px;font-size:8.3px;white-space:nowrap;transform:scaleX(0.9759036144578312);transform-origin:0 0;color:#eaf4ff">Теплосчетчик</div>
<div style="position:absolute;left:322.5px;top:594.56px;width:120.89999999999998px;height:16.25999999999999px;background:#fff"></div>
<div style="position:absolute;left:240.9px;top:598.84px;line-height:10.2px;font-size:8.5px;white-space:nowrap;transform:scaleX(0.93);transform-origin:0 0;font-weight:bold;font-style:italic;color:#1a1a1a">№ Акта</div>
<div style="position:absolute;left:325.2px;top:598.83px;line-height:9.96px;font-size:8.3px;white-space:nowrap;transform:scaleX(0.9759036144578312);transform-origin:0 0;color:#202020">б/н</div>
<div style="position:absolute;left:322.5px;top:610.8199999999999px;width:120.89999999999998px;height:16.25999999999999px;background:#fff"></div>
<div style="position:absolute;left:240.9px;top:615.10px;line-height:10.2px;font-size:8.5px;white-space:nowrap;transform:scaleX(0.93);transform-origin:0 0;font-weight:bold;font-style:italic;color:#1a1a1a">Дата подп.</div>
<div style="position:absolute;left:325.2px;top:615.09px;line-height:9.96px;font-size:8.3px;white-space:nowrap;transform:scaleX(0.9759036144578312);transform-origin:0 0;color:#202020">16.10.2025</div>
<div style="position:absolute;left:322.5px;top:627.0799999999999px;width:120.89999999999998px;height:16.25999999999999px;background:#fff"></div>
<div style="position:absolute;left:240.9px;top:631.36px;line-height:10.2px;font-size:8.5px;white-space:nowrap;transform:scaleX(0.93);transform-origin:0 0;font-weight:bold;font-style:italic;color:#1a1a1a">Организация</div>
<div style="position:absolute;left:325.2px;top:631.35px;line-height:9.96px;font-size:8.3px;white-space:nowrap;transform:scaleX(0.9759036144578312);transform-origin:0 0;color:#202020">Нет</div>
<div style="position:absolute;left:322.5px;top:643.3399999999999px;width:120.89999999999998px;height:16.25999999999999px;background:#fff"></div>
<div style="position:absolute;left:240.9px;top:647.62px;line-height:10.2px;font-size:8.5px;white-space:nowrap;transform:scaleX(0.93);transform-origin:0 0;font-weight:bold;font-style:italic;color:#1a1a1a">Примечание</div>
<svg style="position:absolute;left:225.5px;top:583px" width="5" height="7" viewBox="0 0 5 7"><path d="M0.5 0.5 L4.5 3.5 L0.5 6.5Z" fill="#333"/></svg>
<div style="position:absolute;left:222.3px;top:559.9px;width:221.09999999999997px;height:1px;background:#a0a0a0"></div>
<div style="position:absolute;left:222.3px;top:577.8px;width:221.09999999999997px;height:1px;background:#c4c4c4"></div>
<div style="position:absolute;left:222.3px;top:594.06px;width:221.09999999999997px;height:1px;background:#c4c4c4"></div>
<div style="position:absolute;left:222.3px;top:610.3199999999999px;width:221.09999999999997px;height:1px;background:#c4c4c4"></div>
<div style="position:absolute;left:222.3px;top:626.5799999999999px;width:221.09999999999997px;height:1px;background:#c4c4c4"></div>
<div style="position:absolute;left:222.3px;top:642.8399999999999px;width:221.09999999999997px;height:1px;background:#c4c4c4"></div>
<div style="position:absolute;left:222.3px;top:659.0999999999999px;width:221.09999999999997px;height:1px;background:#a0a0a0"></div>
<div style="position:absolute;left:221.8px;top:560.4px;width:1px;height:99.19999999999993px;background:#a0a0a0"></div>
<div style="position:absolute;left:322.0px;top:560.4px;width:1px;height:99.19999999999993px;background:#a0a0a0"></div>
<div style="position:absolute;left:442.9px;top:560.4px;width:1px;height:99.19999999999993px;background:#a0a0a0"></div>
<div style="position:absolute;left:463.9px;top:560.5px;width:83.39999999999998px;height:27.5px;background:#0078d7"></div>
<div style="position:absolute;left:547.3px;top:560.5px;width:168.10000000000002px;height:27.5px;background:#f0f0f0"></div>
<div style="position:absolute;left:463.9px;width:83.39999999999998px;text-align:center;top:568.60px;line-height:11.28px;font-size:9.4px;white-space:nowrap;font-weight:bold;color:#2a1e5a">Прибор учета</div>
<div style="position:absolute;left:547.3px;width:163.10000000000002px;text-align:center;top:568.51px;line-height:11.4px;font-size:9.5px;white-space:nowrap;font-weight:bold;color:#801a22">Обсл. орган.</div>
<div style="position:absolute;left:463.9px;top:588px;width:251.5px;height:16px;background:#0078d7"></div>
<div style="position:absolute;left:466.5px;top:592.14px;line-height:9.96px;font-size:8.3px;white-space:nowrap;transform:scaleX(0.9879518072289155);transform-origin:0 0;color:#eaf4ff">Теплосчетчик</div>
<div style="position:absolute;left:550px;top:592.14px;line-height:9.96px;font-size:8.3px;white-space:nowrap;transform:scaleX(0.9879518072289155);transform-origin:0 0;color:#eaf4ff">Нет</div>
<div style="position:absolute;left:546.8px;top:560.5px;width:1px;height:43.5px;background:#7fbfff"></div>
<div style="position:absolute;left:463.9px;top:587.5px;width:251.5px;height:1px;background:#7fbfff"></div>
<div style="position:absolute;left:736.4px;top:560.5px;width:107.20000000000005px;height:39.799999999999955px;background:#0078d7"></div>
<div style="position:absolute;left:843.6px;top:560.5px;width:435.4px;height:39.799999999999955px;background:#f0f0f0"></div>
<div style="position:absolute;left:736.4px;width:107.20000000000005px;text-align:center;top:575.39px;line-height:10.92px;font-size:9.1px;white-space:nowrap;font-weight:bold;color:#2a1e5a">Тип счетчика</div>
<div style="position:absolute;left:843.6px;width:134.0px;text-align:center;top:574.63px;line-height:11.88px;font-size:9.9px;white-space:nowrap;font-weight:bold;color:#801a22">Модель</div>
<div style="position:absolute;left:978.6px;width:74.80000000000007px;text-align:center;top:575.20px;line-height:11.16px;font-size:9.3px;white-space:nowrap;font-weight:bold;color:#801a22">Номер</div>
<div style="position:absolute;left:1058.4px;width:84.19999999999982px;text-align:center;top:575.29px;line-height:11.04px;font-size:9.2px;white-space:nowrap;font-weight:bold;color:#801a22">Дата устан.</div>
<div style="position:absolute;left:1142.6px;width:83.80000000000018px;text-align:center;top:575.29px;line-height:11.04px;font-size:9.2px;white-space:nowrap;font-weight:bold;color:#801a22">Дата пов.</div>
<div style="position:absolute;left:1236.5px;top:575.29px;line-height:11.04px;font-size:9.2px;white-space:nowrap;font-weight:bold;color:#801a22">Дата сл.</div>
<div style="position:absolute;left:0;top:0;width:1279px;height:694px;overflow:hidden">
<div style="position:absolute;left:736.4px;top:600.3px;width:542.6px;height:15.900000000000091px;background:#0078d7"></div>
<div style="position:absolute;left:738.6px;top:604.39px;line-height:9.96px;font-size:8.3px;white-space:nowrap;transform:scaleX(0.9879518072289155);transform-origin:0 0;color:#eaf4ff">Тепловычислитель</div>
<div style="position:absolute;left:846.5px;top:604.39px;line-height:9.96px;font-size:8.3px;white-space:nowrap;transform:scaleX(0.9879518072289155);transform-origin:0 0;color:#eaf4ff">ТЭМ-104</div>
<div style="position:absolute;left:978.6px;width:74.80000000000007px;text-align:center;top:604.39px;line-height:9.96px;font-size:8.3px;white-space:nowrap;transform:scaleX(0.9879518072289155);transform-origin:50% 0;color:#eaf4ff">4430021</div>
<div style="position:absolute;left:1058.4px;width:84.19999999999982px;text-align:center;top:604.39px;line-height:9.96px;font-size:8.3px;white-space:nowrap;transform:scaleX(0.9879518072289155);transform-origin:50% 0;color:#eaf4ff">25.12.2020</div>
<div style="position:absolute;left:1142.6px;width:83.80000000000018px;text-align:center;top:604.39px;line-height:9.96px;font-size:8.3px;white-space:nowrap;transform:scaleX(0.9879518072289155);transform-origin:50% 0;color:#eaf4ff">14.11.2022</div>
<div style="position:absolute;left:1249px;top:604.39px;line-height:9.96px;font-size:8.3px;white-space:nowrap;transform:scaleX(0.9879518072289155);transform-origin:0 0;color:#eaf4ff">15.11.2024</div>
<div style="position:absolute;left:736.4px;top:616.2px;width:542.6px;height:16.09999999999991px;background:#fff"></div>
<div style="position:absolute;left:738.6px;top:620.39px;line-height:9.96px;font-size:8.3px;white-space:nowrap;transform:scaleX(0.9879518072289155);transform-origin:0 0;color:#202020">Расходомер</div>
<div style="position:absolute;left:846.5px;top:620.39px;line-height:9.96px;font-size:8.3px;white-space:nowrap;transform:scaleX(0.9879518072289155);transform-origin:0 0;color:#202020">ПРП-100</div>
<div style="position:absolute;left:978.6px;width:74.80000000000007px;text-align:center;top:620.39px;line-height:9.96px;font-size:8.3px;white-space:nowrap;transform:scaleX(0.9879518072289155);transform-origin:50% 0;color:#202020">125691</div>
<div style="position:absolute;left:1058.4px;width:84.19999999999982px;text-align:center;top:620.39px;line-height:9.96px;font-size:8.3px;white-space:nowrap;transform:scaleX(0.9879518072289155);transform-origin:50% 0;color:#202020">25.12.2020</div>
<div style="position:absolute;left:1142.6px;width:83.80000000000018px;text-align:center;top:620.39px;line-height:9.96px;font-size:8.3px;white-space:nowrap;transform:scaleX(0.9879518072289155);transform-origin:50% 0;color:#202020">14.11.2022</div>
<div style="position:absolute;left:1249px;top:620.39px;line-height:9.96px;font-size:8.3px;white-space:nowrap;transform:scaleX(0.9879518072289155);transform-origin:0 0;color:#202020">15.11.2026</div>
<div style="position:absolute;left:736.4px;top:632.3px;width:542.6px;height:16.100000000000023px;background:#fff"></div>
<div style="position:absolute;left:738.6px;top:636.49px;line-height:9.96px;font-size:8.3px;white-space:nowrap;transform:scaleX(0.9879518072289155);transform-origin:0 0;color:#202020">Термопреобразователь</div>
<div style="position:absolute;left:846.5px;top:636.49px;line-height:9.96px;font-size:8.3px;white-space:nowrap;transform:scaleX(0.9879518072289155);transform-origin:0 0;color:#202020">ТЭСМА-К</div>
<div style="position:absolute;left:978.6px;width:74.80000000000007px;text-align:center;top:636.49px;line-height:9.96px;font-size:8.3px;white-space:nowrap;transform:scaleX(0.9879518072289155);transform-origin:50% 0;color:#202020">201619</div>
<div style="position:absolute;left:1058.4px;width:84.19999999999982px;text-align:center;top:636.49px;line-height:9.96px;font-size:8.3px;white-space:nowrap;transform:scaleX(0.9879518072289155);transform-origin:50% 0;color:#202020">25.12.2020</div>
<div style="position:absolute;left:1142.6px;width:83.80000000000018px;text-align:center;top:636.49px;line-height:9.96px;font-size:8.3px;white-space:nowrap;transform:scaleX(0.9879518072289155);transform-origin:50% 0;color:#202020">10.11.2022</div>
<div style="position:absolute;left:1249px;top:636.49px;line-height:9.96px;font-size:8.3px;white-space:nowrap;transform:scaleX(0.9879518072289155);transform-origin:0 0;color:#202020">11.11.2026</div>
</div>
<div style="position:absolute;left:736.4px;top:560.0px;width:542.6px;height:1px;background:#a0a0a0"></div>
<div style="position:absolute;left:736.4px;top:599.8px;width:542.6px;height:1px;background:#7fbfff"></div>
<div style="position:absolute;left:736.4px;top:615.7px;width:542.6px;height:1px;background:#a0a0a0"></div>
<div style="position:absolute;left:736.4px;top:631.8px;width:542.6px;height:1px;background:#a0a0a0"></div>
<div style="position:absolute;left:736.4px;top:647.9px;width:542.6px;height:1px;background:#a0a0a0"></div>
<div style="position:absolute;left:735.9px;top:560.5px;width:1px;height:87.89999999999998px;background:#a0a0a0"></div>
<div style="position:absolute;left:843.1px;top:560.5px;width:1px;height:87.89999999999998px;background:#a0a0a0"></div>
<div style="position:absolute;left:978.1px;top:560.5px;width:1px;height:87.89999999999998px;background:#a0a0a0"></div>
<div style="position:absolute;left:1057.9px;top:560.5px;width:1px;height:87.89999999999998px;background:#a0a0a0"></div>
<div style="position:absolute;left:1142.1px;top:560.5px;width:1px;height:87.89999999999998px;background:#a0a0a0"></div>
<div style="position:absolute;left:1225.9px;top:560.5px;width:1px;height:87.89999999999998px;background:#a0a0a0"></div>
<div style="position:absolute;left:843.1px;top:600.8px;width:1px;height:14.900000000000091px;background:#5aaaf0"></div>
<div style="position:absolute;left:978.1px;top:600.8px;width:1px;height:14.900000000000091px;background:#5aaaf0"></div>
<div style="position:absolute;left:1057.9px;top:600.8px;width:1px;height:14.900000000000091px;background:#5aaaf0"></div>
<div style="position:absolute;left:1142.1px;top:600.8px;width:1px;height:14.900000000000091px;background:#5aaaf0"></div>
<div style="position:absolute;left:1225.9px;top:600.8px;width:1px;height:14.900000000000091px;background:#5aaaf0"></div>
<div style="position:absolute;left:736.4px;top:659.4px;width:542.6px;height:10.6px;background:#f6f6f6"></div>
<div style="position:absolute;left:747px;top:659.8px;width:491.3px;height:9.8px;background:#cdcdcd"></div>
<svg style="position:absolute;left:740px;top:662px" width="5" height="6" viewBox="0 0 5 6"><path d="M4 0.8 L1.2 3 L4 5.2" fill="none" stroke="#505050" stroke-width="1.1"/></svg>
<svg style="position:absolute;left:1270px;top:662px" width="5" height="6" viewBox="0 0 5 6"><path d="M1 0.8 L3.8 3 L1 5.2" fill="none" stroke="#505050" stroke-width="1.1"/></svg>
<div style="position:absolute;left:1px;top:672.5px;width:1278px;height:20.5px;background:#f0f0f0"></div>
<div style="position:absolute;left:1px;top:672px;width:1278px;height:1px;background:#e6e6e6"></div>
<div style="position:absolute;left:3.7px;top:679.64px;line-height:9.96px;font-size:8.3px;white-space:nowrap;transform:scaleX(0.9759036144578312);transform-origin:0 0;color:#202020">Открыто объектов: 72</div>
<div style="position:absolute;left:1275px;top:683px;width:1.2px;height:1.2px;background:#b0b0b0"></div>
<div style="position:absolute;left:1273px;top:686px;width:1.2px;height:1.2px;background:#b0b0b0"></div>
<div style="position:absolute;left:1275px;top:686px;width:1.2px;height:1.2px;background:#b0b0b0"></div>
<div style="position:absolute;left:1271px;top:689px;width:1.2px;height:1.2px;background:#b0b0b0"></div>
<div style="position:absolute;left:1273px;top:689px;width:1.2px;height:1.2px;background:#b0b0b0"></div>
<div style="position:absolute;left:1275px;top:689px;width:1.2px;height:1.2px;background:#b0b0b0"></div>
<div style="position:absolute;left:0px;top:0px;width:560px;height:1px;background:#3a3a3a"></div>
<div style="position:absolute;left:560px;top:0px;width:64px;height:1px;background:#f4f4f4"></div>
<div style="position:absolute;left:624px;top:0px;width:32px;height:1px;background:#6a9a9a"></div>
<div style="position:absolute;left:656px;top:0px;width:65px;height:1px;background:#f4f4f4"></div>
<div style="position:absolute;left:721px;top:0px;width:528px;height:1px;background:#3a3a3a"></div>
<div style="position:absolute;left:0px;top:0px;width:1px;height:694px;background:#3a3a3a"></div>
<div style="position:absolute;left:1279px;top:19.5px;width:1px;height:674.5px;background:#4a4a4a"></div>
<div style="position:absolute;left:0px;top:693px;width:1280px;height:1px;background:#3a3a3a"></div></body></html>
